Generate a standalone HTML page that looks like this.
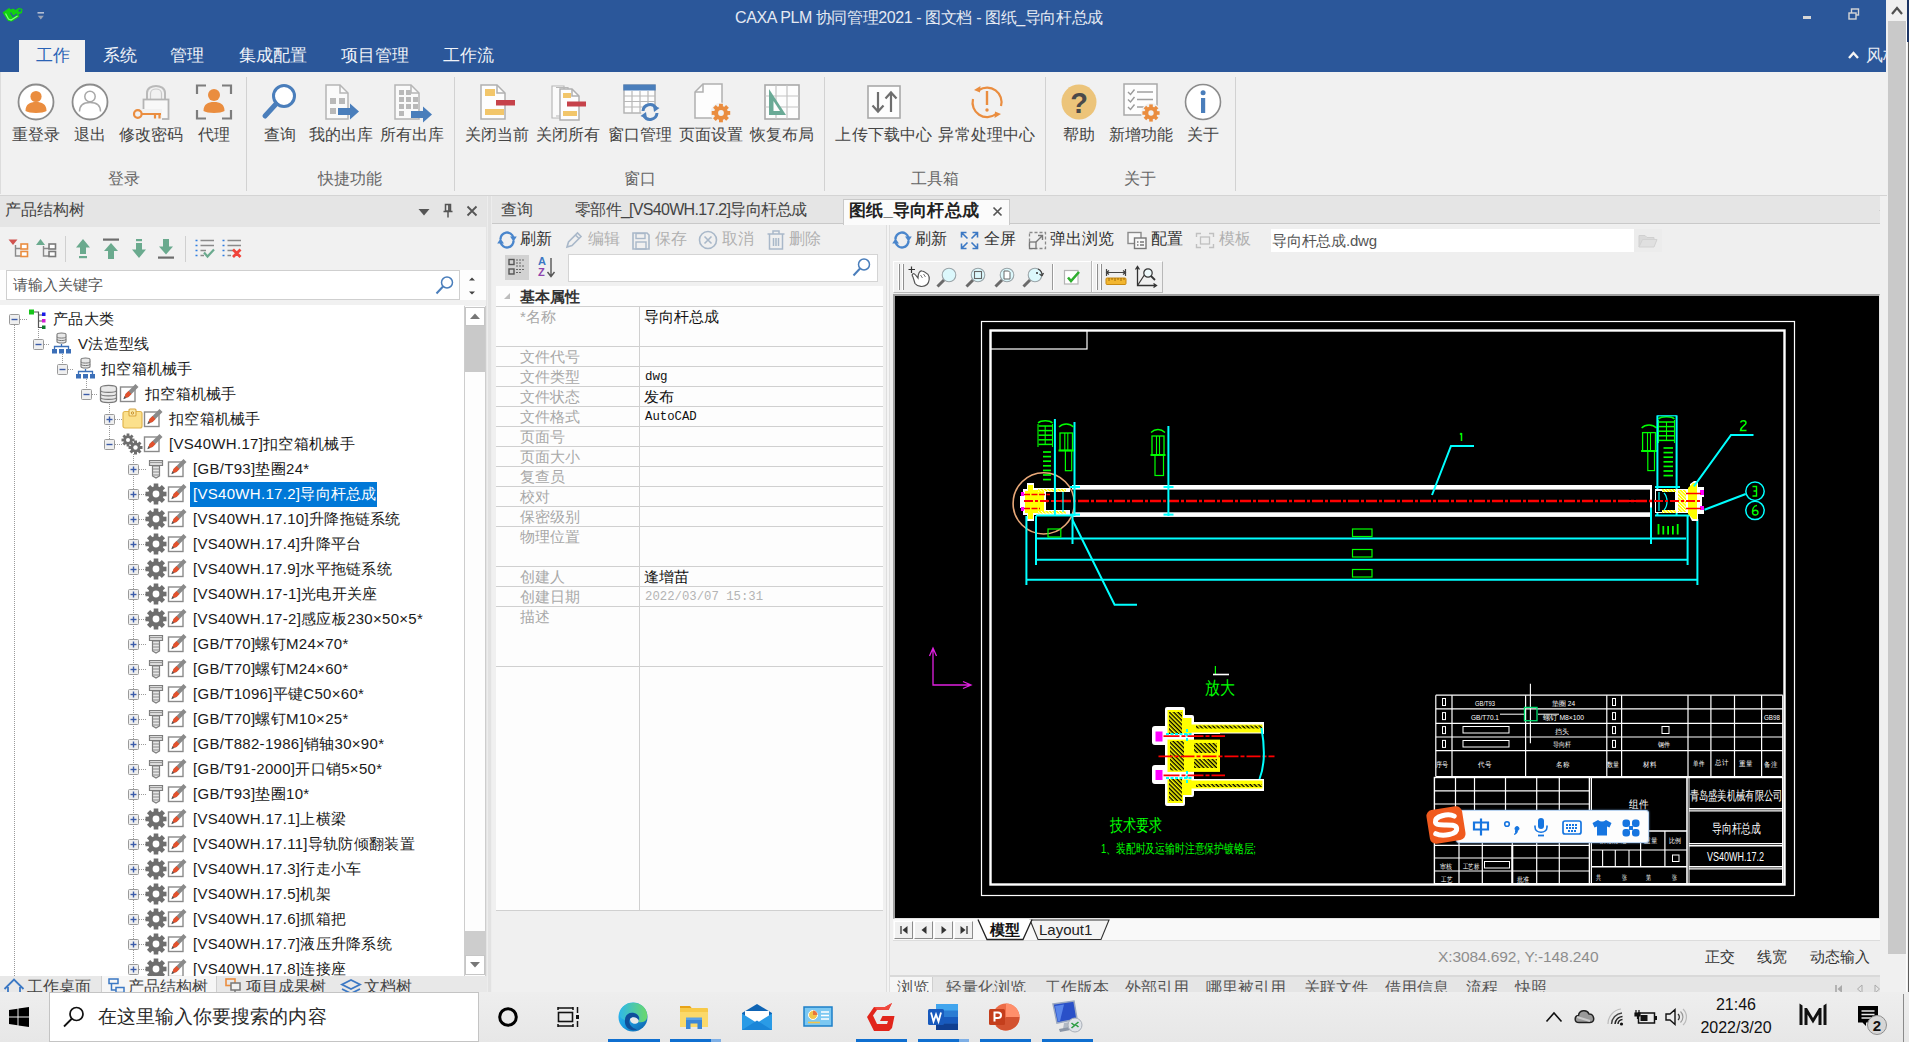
<!DOCTYPE html>
<html><head><meta charset="utf-8"><title>CAXA PLM</title>
<style>
*{box-sizing:border-box;margin:0;padding:0}
html,body{width:1909px;height:1042px;overflow:hidden;background:#f0f0f0}
body{font-family:"Liberation Sans",sans-serif;font-size:15px;color:#333}
#root{position:relative;width:1909px;height:1042px;overflow:hidden;background:#f0f0f0}
.a{position:absolute}
.t{position:absolute;white-space:nowrap;line-height:1}
svg{position:absolute;overflow:visible}

</style></head>
<body>
<div id="root">
<div class="a" style="left:0;top:0;width:1886px;height:72px;background:#2b579a"></div>
<svg style="left:2px;top:7px" width="22" height="16" viewBox="0 0 22 16"><path d="M0.500 5.500 L7 1 L9 2.500 L11 1.500 L13.500 3 L17 0.800 L20.500 2 L20 6 L16.500 7.500 L17.500 9.500 L10 14.500 L6 14 Z" fill="#12d112"/><path d="M3.500 6.500 L6.500 12 L9 13 L15.500 9" fill="none" stroke="#7dff7d" stroke-width="1.200"/><path d="M8.500 5.500 L11 9.500 L15 7" fill="none" stroke="#2b579a" stroke-width="1.300"/><circle cx="17.800" cy="3.600" r="1.300" fill="#2b579a"/></svg>
<svg style="left:37px;top:11px" width="8" height="9" viewBox="0 0 8 9"><rect x="0.500" y="1" width="6.500" height="1.600" fill="#b4bfd4"/><path d="M0.800 4.800 L6.800 4.800 L3.800 8.500 Z" fill="#9aa3b5"/></svg>
<div class="t" style="left:735px;top:10px;font-size:16px;color:#e4e9f2;letter-spacing:-0.400px">CAXA PLM 协同管理2021 - 图文档 - 图纸_导向杆总成</div>
<div class="a" style="left:1803px;top:16px;width:8px;height:3px;background:#d6d6d6"></div>
<svg style="left:1848px;top:8px" width="12" height="12" viewBox="0 0 12 12"><rect x="3.5" y="1" width="7" height="6" fill="none" stroke="#d6d6d6" stroke-width="1.4"/><rect x="1" y="5" width="7" height="6" fill="#2b579a" stroke="#d6d6d6" stroke-width="1.4"/></svg>
<div class="a" style="left:19px;top:40px;width:66px;height:33px;background:#f1f1f1"></div>
<div class="t" style="left:36px;top:47px;font-size:17px;color:#2b63b5">工作</div>
<div class="t" style="left:103px;top:47px;font-size:17px;color:#f0f3f8">系统</div>
<div class="t" style="left:170px;top:47px;font-size:17px;color:#f0f3f8">管理</div>
<div class="t" style="left:239px;top:47px;font-size:17px;color:#f0f3f8">集成配置</div>
<div class="t" style="left:341px;top:47px;font-size:17px;color:#f0f3f8">项目管理</div>
<div class="t" style="left:443px;top:47px;font-size:17px;color:#f0f3f8">工作流</div>
<svg style="left:1848px;top:51px" width="11" height="8" viewBox="0 0 11 8"><path d="M1 7 L5.5 2 L10 7" fill="none" stroke="#f4f4f4" stroke-width="2.4"/></svg>
<div class="a" style="left:1866px;top:46px;width:21px;height:20px;overflow:hidden"><div class="t" style="left:0;top:1px;font-size:17px;color:#e8ecf4">风格</div></div>
<div class="a" style="left:0;top:72px;width:1887px;height:124px;background:#f1f1f1;border-bottom:1px solid #d4d4d4"></div>
<div class="a" style="left:0;top:72px;width:1px;height:122px;background:#dcdcdc"></div>
<div class="a" style="left:246px;top:77px;width:1px;height:114px;background:#d2d2d2"></div>
<div class="a" style="left:454px;top:77px;width:1px;height:114px;background:#d2d2d2"></div>
<div class="a" style="left:824px;top:77px;width:1px;height:114px;background:#d2d2d2"></div>
<div class="a" style="left:1045px;top:77px;width:1px;height:114px;background:#d2d2d2"></div>
<div class="a" style="left:1235px;top:77px;width:1px;height:114px;background:#d2d2d2"></div>
<svg style="left:16px;top:82px" width="40" height="40" viewBox="0 0 40 40"><circle cx="20" cy="20" r="17.5" fill="#fff" stroke="#8c8c8c" stroke-width="1.8"/><circle cx="20" cy="14.5" r="5.6" fill="#ea8d3f"/><path d="M9.5 29 C9.5 22 14 20 20 20 C26 20 30.500 22 30.500 29 C27 31.500 13 31.500 9.500 29 Z" fill="#ea8d3f"/></svg>
<svg style="left:70px;top:82px" width="40" height="40" viewBox="0 0 40 40"><circle cx="20" cy="20" r="17.5" fill="#fff" stroke="#8c8c8c" stroke-width="1.8"/><circle cx="20" cy="14.5" r="5.2" fill="#fff" stroke="#a8a8a8" stroke-width="1.5"/><path d="M9.5 29.500 C9.500 22.500 14 20.500 20 20.500 C26 20.500 30.500 22.500 30.500 29.500" fill="#fff" stroke="#a8a8a8" stroke-width="1.500"/></svg>
<svg style="left:131px;top:82px" width="40" height="40" viewBox="0 0 40 40"><path d="M16 18 V11 C16 1.500 34 1.500 34 11 V18" fill="none" stroke="#b9b9b9" stroke-width="2"/><path d="M19.500 18 V11.500 C19.500 5.500 30.500 5.500 30.500 11.500 V18" fill="none" stroke="#c9c9c9" stroke-width="1.200"/><rect x="12.500" y="17.500" width="25" height="19.500" fill="#f8f8f8" stroke="#b4b4b4" stroke-width="1.800"/><rect x="9" y="27" width="22" height="12" fill="#f1f1f1"/><circle cx="6.800" cy="32" r="3.800" fill="none" stroke="#ea8d3f" stroke-width="2.200"/><path d="M10.500 32 H30 M24 32 V36.500 M28.500 32 V36.500" fill="none" stroke="#ea8d3f" stroke-width="2.200"/></svg>
<svg style="left:194px;top:82px" width="40" height="40" viewBox="0 0 40 40"><path d="M3 12 V3.500 H12 M28 3.500 H37 V12 M37 28 V36.500 H28 M12 36.500 H3 V28" fill="none" stroke="#7d7d7d" stroke-width="2.200"/><circle cx="20" cy="13" r="6" fill="#ea8d3f"/><path d="M9.5 29 C9.5 22 14 20 20 20 C26 20 30.500 22 30.500 29 C27 31.500 13 31.500 9.500 29 Z" fill="#ea8d3f"/></svg>
<svg style="left:260px;top:82px" width="40" height="40" viewBox="0 0 40 40"><circle cx="24" cy="14" r="10.500" fill="#fff" stroke="#4a7ebb" stroke-width="3"/><path d="M16 22 L5 34" stroke="#4a7ebb" stroke-width="5" stroke-linecap="round"/></svg>
<svg style="left:321px;top:82px" width="40" height="40" viewBox="0 0 40 40"><path d="M5 3 H19 L27 11 V37 H5 Z" fill="#fafafa" stroke="#b5b5b5" stroke-width="1.5"/><path d="M19 3 V11 H27" fill="none" stroke="#b5b5b5" stroke-width="1.500"/><rect x="9" y="16" width="6" height="6" fill="#b9b9b9"/><rect x="18" y="16" width="6" height="6" fill="#b9b9b9"/><rect x="9" y="26" width="6" height="6" fill="#b9b9b9"/><path d="M17 26 h12 v-4.500 l9 8 l-9 8 v-4.500 h-12 Z" fill="#4a7ebb"/></svg>
<svg style="left:392px;top:82px" width="40" height="40" viewBox="0 0 40 40"><path d="M3 3 H19 L27 11 V37 H3 Z" fill="#fafafa" stroke="#b5b5b5" stroke-width="1.5"/><path d="M19 3 V11 H27" fill="none" stroke="#b5b5b5" stroke-width="1.500"/><rect x="7" y="8" width="5" height="5" fill="#b9b9b9"/><rect x="7" y="15" width="5" height="5" fill="#b9b9b9"/><rect x="7" y="22" width="5" height="5" fill="#b9b9b9"/><rect x="7" y="29" width="5" height="5" fill="#b9b9b9"/><rect x="14" y="8" width="5" height="5" fill="#b9b9b9"/><rect x="14" y="15" width="5" height="5" fill="#b9b9b9"/><rect x="14" y="22" width="5" height="5" fill="#b9b9b9"/><rect x="21" y="15" width="5" height="5" fill="#b9b9b9"/><rect x="21" y="22" width="5" height="5" fill="#b9b9b9"/><path d="M19 29 h12 v-4.500 l9 8 l-9 8 v-4.500 h-12 Z" fill="#4a7ebb"/></svg>
<svg style="left:477px;top:82px" width="40" height="40" viewBox="0 0 40 40"><path d="M4 3 H20 L28 11 V37 H4 Z" fill="#fdfdfd" stroke="#b0b0b0" stroke-width="1.500"/><path d="M20 3 V11 H28" fill="none" stroke="#b0b0b0" stroke-width="1.500"/><rect x="8" y="7" width="10" height="7" fill="#f2c66a"/><rect x="8" y="27" width="19" height="6" fill="#f2c66a"/><rect x="19" y="18" width="19" height="5.500" fill="#c6424a"/></svg>
<svg style="left:548px;top:82px" width="40" height="40" viewBox="0 0 40 40"><path d="M4 4 H16 V36 H4 Z M8 5.500 H20 V34 H8" fill="#fafafa" stroke="#b8b8b8" stroke-width="1.200"/><path d="M12 7 H24 L31 14 V38 H12 Z" fill="#fdfdfd" stroke="#b0b0b0" stroke-width="1.500"/><path d="M24 7 V14 H31" fill="none" stroke="#b0b0b0" stroke-width="1.500"/><rect x="15" y="11" width="8" height="5" fill="#f2c66a"/><rect x="15" y="29" width="14" height="5" fill="#f2c66a"/><rect x="19" y="19.500" width="19" height="5" fill="#c6424a"/></svg>
<svg style="left:620px;top:82px" width="40" height="40" viewBox="0 0 40 40"><rect x="4" y="3" width="31" height="28" fill="#fdfdfd" stroke="#b0b0b0" stroke-width="1.400"/><rect x="3.300" y="2.500" width="32.400" height="6" fill="#4a7ebb"/><path d="M4 14 H35 M4 19.500 H35 M4 25 H35 M12 9 V31 M20 9 V31 M28 9 V31" stroke="#b8b8b8" stroke-width="1.200"/><circle cx="30" cy="30" r="9" fill="#f1f1f1"/><path d="M23 29 A7 7 0 0 1 36 26" fill="none" stroke="#4a7ebb" stroke-width="3"/><path d="M37 31 A7 7 0 0 1 24 34" fill="none" stroke="#4a7ebb" stroke-width="3"/><path d="M33 23 L39.500 26 L34 30 Z M27 37 L20.500 34 L26 30 Z" fill="#4a7ebb"/></svg>
<svg style="left:691px;top:82px" width="40" height="40" viewBox="0 0 40 40"><path d="M4 10 L12 2 H31 V36 H4 Z" fill="#fdfdfd" stroke="#b0b0b0" stroke-width="1.500"/><path d="M12 2 V10 H4" fill="none" stroke="#b0b0b0" stroke-width="1.500"/><circle cx="30" cy="31" r="10.500" fill="#f1f1f1"/><g transform="translate(30 31)"><rect x="-2.0" y="-9.2" width="3.9" height="18.5" fill="#ea8d3f" transform="rotate(0)"/><rect x="-2.0" y="-9.2" width="3.9" height="18.5" fill="#ea8d3f" transform="rotate(45)"/><rect x="-2.0" y="-9.2" width="3.9" height="18.5" fill="#ea8d3f" transform="rotate(90)"/><rect x="-2.0" y="-9.2" width="3.9" height="18.5" fill="#ea8d3f" transform="rotate(135)"/><circle r="7.0" fill="#ea8d3f"/><circle r="2.9" fill="#f1f1f1"/></g></svg>
<svg style="left:762px;top:82px" width="40" height="40" viewBox="0 0 40 40"><rect x="3" y="3" width="34" height="34" fill="#fdfdfd" stroke="#a9a9a9" stroke-width="1.600"/><path d="M3 14 H37 M3 25 H37 M14 3 V37 M25 3 V37" stroke="#c4c4c4" stroke-width="1.200"/><path d="M7 7 V33 H24 Z" fill="#6aaa96"/><path d="M11.500 19 V29 H18 Z" fill="#fdfdfd"/></svg>
<svg style="left:864px;top:82px" width="40" height="40" viewBox="0 0 40 40"><rect x="4" y="4" width="32" height="32" fill="#fdfdfd" stroke="#a9a9a9" stroke-width="1.600"/><path d="M14 10 V29 M8.500 23.500 L14 29.500 L19.500 23.500" fill="none" stroke="#6e6e6e" stroke-width="2.200"/><path d="M27 30 V11 M21.500 16.500 L27 10.500 L32.500 16.500" fill="none" stroke="#6e6e6e" stroke-width="2.200"/></svg>
<svg style="left:967px;top:82px" width="40" height="40" viewBox="0 0 40 40"><path d="M12 8 A14.500 14.500 0 0 1 34 24" fill="none" stroke="#ea8d3f" stroke-width="2.200"/><path d="M29 32 A14.500 14.500 0 0 1 6 17" fill="none" stroke="#ea8d3f" stroke-width="2.200"/><path d="M13.500 4 L13 10.500 L7 8 Z M27.500 36 L28 29.500 L34 32 Z" fill="#ea8d3f"/><path d="M20 9 V23" stroke="#ea8d3f" stroke-width="2.400"/><circle cx="20" cy="28" r="1.700" fill="#ea8d3f"/></svg>
<svg style="left:1059px;top:82px" width="40" height="40" viewBox="0 0 40 40"><circle cx="20" cy="20" r="17.500" fill="#ecc47a"/><text x="20" y="30.500" font-family="Liberation Sans" font-weight="bold" font-size="29" text-anchor="middle" fill="#4a4a4a">?</text></svg>
<svg style="left:1121px;top:82px" width="40" height="40" viewBox="0 0 40 40"><rect x="3" y="2" width="33" height="31" fill="#fdfdfd" stroke="#a9a9a9" stroke-width="1.500"/><path d="M16 10 H32 M16 17.500 H32 M16 25 H24" stroke="#a0a0a0" stroke-width="1.400"/><path d="M7 10 l2.500 2.500 l4 -5 M7 17.500 l2.500 2.500 l4 -5 M7 25 l2.500 2.500 l4 -5" fill="none" stroke="#9a9a9a" stroke-width="1.400"/><circle cx="30" cy="31" r="10" fill="#f1f1f1"/><g transform="translate(30 31)"><rect x="-1.8" y="-8.6" width="3.6" height="17.2" fill="#ea8d3f" transform="rotate(0)"/><rect x="-1.8" y="-8.6" width="3.6" height="17.2" fill="#ea8d3f" transform="rotate(45)"/><rect x="-1.8" y="-8.6" width="3.6" height="17.2" fill="#ea8d3f" transform="rotate(90)"/><rect x="-1.8" y="-8.6" width="3.6" height="17.2" fill="#ea8d3f" transform="rotate(135)"/><circle r="6.5" fill="#ea8d3f"/><circle r="2.7" fill="#f1f1f1"/></g></svg>
<svg style="left:1183px;top:82px" width="40" height="40" viewBox="0 0 40 40"><circle cx="20" cy="20" r="17.500" fill="#fff" stroke="#8c8c8c" stroke-width="1.600"/><rect x="18" y="16" width="4.200" height="15" fill="#4a7ebb"/><circle cx="20.100" cy="10.800" r="2.500" fill="#4a7ebb"/></svg>
<div class="t" style="left:-34px;top:127px;width:140px;text-align:center;font-size:16px;color:#444;letter-spacing:0.2px">重登录</div>
<div class="t" style="left:20px;top:127px;width:140px;text-align:center;font-size:16px;color:#444;letter-spacing:0.2px">退出</div>
<div class="t" style="left:81px;top:127px;width:140px;text-align:center;font-size:16px;color:#444;letter-spacing:0.2px">修改密码</div>
<div class="t" style="left:144px;top:127px;width:140px;text-align:center;font-size:16px;color:#444;letter-spacing:0.2px">代理</div>
<div class="t" style="left:210px;top:127px;width:140px;text-align:center;font-size:16px;color:#444;letter-spacing:0.2px">查询</div>
<div class="t" style="left:271px;top:127px;width:140px;text-align:center;font-size:16px;color:#444;letter-spacing:0.2px">我的出库</div>
<div class="t" style="left:342px;top:127px;width:140px;text-align:center;font-size:16px;color:#444;letter-spacing:0.2px">所有出库</div>
<div class="t" style="left:427px;top:127px;width:140px;text-align:center;font-size:16px;color:#444;letter-spacing:0.2px">关闭当前</div>
<div class="t" style="left:498px;top:127px;width:140px;text-align:center;font-size:16px;color:#444;letter-spacing:0.2px">关闭所有</div>
<div class="t" style="left:570px;top:127px;width:140px;text-align:center;font-size:16px;color:#444;letter-spacing:0.2px">窗口管理</div>
<div class="t" style="left:641px;top:127px;width:140px;text-align:center;font-size:16px;color:#444;letter-spacing:0.2px">页面设置</div>
<div class="t" style="left:712px;top:127px;width:140px;text-align:center;font-size:16px;color:#444;letter-spacing:0.2px">恢复布局</div>
<div class="t" style="left:814px;top:127px;width:140px;text-align:center;font-size:16px;color:#444;letter-spacing:0.2px">上传下载中心</div>
<div class="t" style="left:917px;top:127px;width:140px;text-align:center;font-size:16px;color:#444;letter-spacing:0.2px">异常处理中心</div>
<div class="t" style="left:1009px;top:127px;width:140px;text-align:center;font-size:16px;color:#444;letter-spacing:0.2px">帮助</div>
<div class="t" style="left:1071px;top:127px;width:140px;text-align:center;font-size:16px;color:#444;letter-spacing:0.2px">新增功能</div>
<div class="t" style="left:1133px;top:127px;width:140px;text-align:center;font-size:16px;color:#444;letter-spacing:0.2px">关于</div>
<div class="t" style="left:54px;top:171px;width:140px;text-align:center;font-size:16px;color:#666">登录</div>
<div class="t" style="left:280px;top:171px;width:140px;text-align:center;font-size:16px;color:#666">快捷功能</div>
<div class="t" style="left:570px;top:171px;width:140px;text-align:center;font-size:16px;color:#666">窗口</div>
<div class="t" style="left:865px;top:171px;width:140px;text-align:center;font-size:16px;color:#666">工具箱</div>
<div class="t" style="left:1070px;top:171px;width:140px;text-align:center;font-size:16px;color:#666">关于</div>
<div class="a" style="left:0;top:196px;width:487px;height:31px;background:#e5e5e5"></div>
<div class="t" style="left:5px;top:202px;font-size:16px;color:#444">产品结构树</div>
<svg style="left:418px;top:208px" width="12" height="8" viewBox="0 0 12 8"><path d="M0.500 1 H11.500 L6 7.500 Z" fill="#555"/></svg>
<svg style="left:442px;top:203px" width="12" height="16" viewBox="0 0 12 16"><path d="M3.500 1.500 H8.500 V8 H3.500 Z M1.500 8.500 H10.500 M6 9 V14.500" fill="none" stroke="#555" stroke-width="1.500"/><path d="M7 2 V8" stroke="#555" stroke-width="1.800"/></svg>
<svg style="left:466px;top:205px" width="12" height="12" viewBox="0 0 12 12"><path d="M1.500 1.500 L10.500 10.500 M10.500 1.500 L1.500 10.500" stroke="#555" stroke-width="1.800"/></svg>
<div class="a" style="left:0;top:227px;width:487px;height:765px;background:#f1f1f1"></div>
<div class="a" style="left:486px;top:196px;width:1px;height:796px;background:#e4e4e4"></div>
<svg style="left:7px;top:237px" width="24" height="24" viewBox="0 0 24 24"><path d="M1.500 2.500 H10.500 L6 8 Z" fill="#d0534f"/><path d="M8.500 8 V19 H14 M8.500 11.500 H14" fill="none" stroke="#8a8a8a" stroke-width="1.400"/><rect x="14" y="7" width="6.500" height="5" fill="#fff" stroke="#ea8d3f" stroke-width="1.600"/><rect x="14" y="14.500" width="6.500" height="5" fill="#fff" stroke="#ea8d3f" stroke-width="1.600"/></svg>
<svg style="left:34px;top:237px" width="24" height="24" viewBox="0 0 24 24"><path d="M6.500 2 L11 8 H2 Z" fill="#6aaa8e"/><path d="M9.500 9 V19 H15 M9.500 11.500 H15" fill="none" stroke="#8a8a8a" stroke-width="1.400"/><rect x="15" y="7" width="6.500" height="5" fill="#fff" stroke="#7a7a7a" stroke-width="1.600"/><rect x="15" y="14.500" width="6.500" height="5" fill="#fff" stroke="#7a7a7a" stroke-width="1.600"/></svg>
<div class="a" style="left:65px;top:236px;width:1px;height:26px;background:#d0d0d0"></div>
<svg style="left:71px;top:237px" width="24" height="24" viewBox="0 0 24 24"><path d="M12 2 L19 10.500 H15 V17 H9 V10.500 H5 Z" fill="#6aaa8e"/><rect x="8" y="19" width="8" height="2.200" fill="#6aaa8e"/></svg>
<svg style="left:99px;top:237px" width="24" height="24" viewBox="0 0 24 24"><rect x="4" y="1.500" width="16" height="2.200" fill="#6d6d6d"/><path d="M12 6 L19 14 H15 V22 H9 V14 H5 Z" fill="#6aaa8e"/></svg>
<svg style="left:127px;top:237px" width="24" height="24" viewBox="0 0 24 24"><rect x="9" y="2" width="6" height="2.200" fill="#6aaa8e"/><path d="M9 6 H15 V12.500 H19 L12 21 L5 12.500 H9 Z" fill="#6aaa8e"/></svg>
<svg style="left:154px;top:237px" width="24" height="24" viewBox="0 0 24 24"><path d="M9 2 H15 V9.500 H19 L12 17.500 L5 9.500 H9 Z" fill="#6aaa8e"/><rect x="4" y="19.500" width="16" height="2.200" fill="#6d6d6d"/></svg>
<div class="a" style="left:185px;top:236px;width:1px;height:26px;background:#d0d0d0"></div>
<svg style="left:193px;top:237px" width="24" height="24" viewBox="0 0 24 24"><path d="M7.500 3.500 H21 M7.500 8.500 H21 M7.500 13.500 H13 M7.500 18.500 H11" stroke="#8a8a8a" stroke-width="1.400"/><path d="M2.500 3.500 H4.500 M2.500 8.500 H4.500 M2.500 13.500 H4.500 M2.500 18.500 H4.500" stroke="#2f7de0" stroke-width="1.600"/><path d="M11 15.500 L14.500 19.500 L21 12.500" fill="none" stroke="#6aaa8e" stroke-width="2.200"/></svg>
<svg style="left:220px;top:237px" width="24" height="24" viewBox="0 0 24 24"><path d="M7.500 3.500 H21 M7.500 8.500 H21 M7.500 13.500 H13 M7.500 18.500 H11" stroke="#8a8a8a" stroke-width="1.400"/><path d="M2.500 3.500 H4.500 M2.500 8.500 H4.500 M2.500 13.500 H4.500 M2.500 18.500 H4.500" stroke="#2f7de0" stroke-width="1.600"/><path d="M13 12.500 L20.500 20 M20.500 12.500 L13 20" fill="none" stroke="#f0443a" stroke-width="2.800"/></svg>
<div class="a" style="left:0;top:270px;width:486px;height:30px;background:#fdfdfd"></div>
<div class="a" style="left:6px;top:270px;width:454px;height:30px;background:#fff;border:1px solid #cfcfcf"></div>
<div class="t" style="left:13px;top:277px;font-size:15px;color:#555">请输入关键字</div>
<svg style="left:435px;top:275px" width="20" height="20" viewBox="0 0 20 20"><circle cx="12" cy="7.500" r="5.500" fill="none" stroke="#4a7ebb" stroke-width="1.500"/><path d="M8 11.500 L1.500 18.500" stroke="#4a7ebb" stroke-width="2"/></svg>
<svg style="left:468px;top:276px" width="8" height="20" viewBox="0 0 8 20"><path d="M1 4.500 L4 1.500 L7 4.500 Z M1 15.500 L4 18.500 L7 15.500 Z" fill="#444"/></svg>
<div class="a" style="left:0;top:305px;width:464px;height:671px;background:#fff"></div>
<div class="a" style="left:464px;top:306px;width:22px;height:670px;background:#fdfdfd;border-left:1px solid #cdcdcd;border-right:1px solid #cdcdcd"></div>
<div class="a" style="left:465px;top:307px;width:20px;height:19px;background:#fff;border:1px solid #c6c6c6"></div>
<svg style="left:469px;top:312px" width="12" height="8" viewBox="0 0 12 8"><path d="M1 7 L6 1.500 L11 7 Z" fill="#777"/></svg>
<div class="a" style="left:465px;top:326px;width:20px;height:46px;background:#c9c9c9"></div>
<div class="a" style="left:465px;top:931px;width:20px;height:24px;background:#cdcdcd"></div>
<div class="a" style="left:465px;top:955px;width:20px;height:20px;background:#fff;border:1px solid #c6c6c6"></div>
<svg style="left:469px;top:961px" width="12" height="8" viewBox="0 0 12 8"><path d="M1 1 L6 6.500 L11 1 Z" fill="#777"/></svg>
<div class="a" style="left:14px;top:325px;width:1px;height:651px;background:repeating-linear-gradient(180deg,#9a9a9a 0 1px,transparent 1px 2px)"></div>
<div class="a" style="left:38px;top:329px;width:1px;height:10px;background:repeating-linear-gradient(180deg,#9a9a9a 0 1px,transparent 1px 2px)"></div>
<div class="a" style="left:62px;top:354px;width:1px;height:10px;background:repeating-linear-gradient(180deg,#9a9a9a 0 1px,transparent 1px 2px)"></div>
<div class="a" style="left:86px;top:379px;width:1px;height:10px;background:repeating-linear-gradient(180deg,#9a9a9a 0 1px,transparent 1px 2px)"></div>
<div class="a" style="left:109px;top:404px;width:1px;height:35px;background:repeating-linear-gradient(180deg,#9a9a9a 0 1px,transparent 1px 2px)"></div>
<div class="a" style="left:133px;top:454px;width:1px;height:522px;background:repeating-linear-gradient(180deg,#9a9a9a 0 1px,transparent 1px 2px)"></div>
<div class="a" style="left:20px;top:319px;width:8px;height:1px;background:repeating-linear-gradient(90deg,#9a9a9a 0 1px,transparent 1px 2px)"></div>
<svg style="left:9px;top:314px" width="11" height="11" viewBox="0 0 11 11"><rect x="0.500" y="0.500" width="10" height="10" rx="1" fill="#efefef" stroke="#9a9a9a"/><path d="M2.500 5.500 H8.500" stroke="#3b5ba8" stroke-width="1.400"/></svg>
<svg style="left:28px;top:308px" width="20" height="22" viewBox="0 0 20 22"><rect x="1" y="1.500" width="5" height="5" fill="#17c41a"/><path d="M6 4 H10.500 V19.500 H14 M10.500 7 H14 M10.500 13 H14" fill="none" stroke="#555" stroke-width="1.200"/><rect x="14" y="4.500" width="3.500" height="3.500" fill="#1a1ae6"/><rect x="14" y="11" width="3.500" height="3.500" fill="#d11bd1"/><rect x="14" y="17.500" width="3.500" height="3.500" fill="#0c7a2a"/></svg>
<div class="t" style="left:53px;top:311px;font-size:15px;color:#1a1a1a;letter-spacing:0.300px">产品大类</div>
<div class="a" style="left:44px;top:344px;width:6px;height:1px;background:repeating-linear-gradient(90deg,#9a9a9a 0 1px,transparent 1px 2px)"></div>
<svg style="left:33px;top:339px" width="11" height="11" viewBox="0 0 11 11"><rect x="0.500" y="0.500" width="10" height="10" rx="1" fill="#efefef" stroke="#9a9a9a"/><path d="M2.500 5.500 H8.500" stroke="#3b5ba8" stroke-width="1.400"/></svg>
<svg style="left:51px;top:332px" width="22" height="22" viewBox="0 0 22 22"><path d="M6 2.500 C6 0.500 15 0.500 15 2.500 V9.500 C15 11.500 6 11.500 6 9.500 Z" fill="#e8e8e8" stroke="#777" stroke-width="1.100"/><path d="M6 4.800 C6 6.500 15 6.500 15 4.800 M6 7.200 C6 9 15 9 15 7.200" fill="none" stroke="#777"/><path d="M10.500 12 V14.500 M3.500 17.500 V14.500 H17.500 V17.500" fill="none" stroke="#3b6fb8" stroke-width="1.300"/><rect x="1" y="17" width="5" height="4.500" fill="#3b6fb8"/><rect x="8" y="17" width="5" height="4.500" fill="#3b6fb8"/><rect x="15" y="17" width="5" height="4.500" fill="#3b6fb8"/></svg>
<div class="t" style="left:78px;top:336px;font-size:15px;color:#1a1a1a;letter-spacing:0.300px">V法造型线</div>
<div class="a" style="left:68px;top:369px;width:6px;height:1px;background:repeating-linear-gradient(90deg,#9a9a9a 0 1px,transparent 1px 2px)"></div>
<svg style="left:57px;top:364px" width="11" height="11" viewBox="0 0 11 11"><rect x="0.500" y="0.500" width="10" height="10" rx="1" fill="#efefef" stroke="#9a9a9a"/><path d="M2.500 5.500 H8.500" stroke="#3b5ba8" stroke-width="1.400"/></svg>
<svg style="left:75px;top:357px" width="22" height="22" viewBox="0 0 22 22"><path d="M6 2.500 C6 0.500 15 0.500 15 2.500 V9.500 C15 11.500 6 11.500 6 9.500 Z" fill="#e8e8e8" stroke="#777" stroke-width="1.100"/><path d="M6 4.800 C6 6.500 15 6.500 15 4.800 M6 7.200 C6 9 15 9 15 7.200" fill="none" stroke="#777"/><path d="M10.500 12 V14.500 M3.500 17.500 V14.500 H17.500 V17.500" fill="none" stroke="#3b6fb8" stroke-width="1.300"/><rect x="1" y="17" width="5" height="4.500" fill="#3b6fb8"/><rect x="8" y="17" width="5" height="4.500" fill="#3b6fb8"/><rect x="15" y="17" width="5" height="4.500" fill="#3b6fb8"/></svg>
<div class="t" style="left:101px;top:361px;font-size:15px;color:#1a1a1a;letter-spacing:0.300px">扣空箱机械手</div>
<div class="a" style="left:92px;top:394px;width:6px;height:1px;background:repeating-linear-gradient(90deg,#9a9a9a 0 1px,transparent 1px 2px)"></div>
<svg style="left:81px;top:389px" width="11" height="11" viewBox="0 0 11 11"><rect x="0.500" y="0.500" width="10" height="10" rx="1" fill="#efefef" stroke="#9a9a9a"/><path d="M2.500 5.500 H8.500" stroke="#3b5ba8" stroke-width="1.400"/></svg>
<svg style="left:99px;top:384px" width="20" height="20" viewBox="0 0 20 20"><path d="M1.500 4 C1.500 0.500 17.500 0.500 17.500 4 V16 C17.500 19.500 1.500 19.500 1.500 16 Z" fill="#e9e9e9" stroke="#7a7a7a" stroke-width="1.300"/><path d="M1.500 6.500 C1.500 9 17.500 9 17.500 6.500 M1.500 10 C1.500 12.500 17.500 12.500 17.500 10 M1.500 13.500 C1.500 16 17.500 16 17.500 13.500" fill="none" stroke="#7a7a7a" stroke-width="1.200"/></svg>
<svg style="left:119px;top:383px" width="20" height="20" viewBox="0 0 20 20"><rect x="1.500" y="4" width="14.500" height="14.500" fill="#fff" stroke="#8a8a8a" stroke-width="1.400"/><path d="M5 15.500 L6.500 11 L16.500 1 L19.500 4 L9.500 14 Z" fill="#8a8a8a"/><path d="M5 15.500 L6.500 11 L9.500 8 L12.500 11 L9.500 14 Z" fill="#e2512d"/><path d="M4.300 16.200 L5.400 13.200 L7.300 15.100 Z" fill="#555"/></svg>
<div class="t" style="left:145px;top:386px;font-size:15px;color:#1a1a1a;letter-spacing:0.300px">扣空箱机械手</div>
<div class="a" style="left:115px;top:419px;width:7px;height:1px;background:repeating-linear-gradient(90deg,#9a9a9a 0 1px,transparent 1px 2px)"></div>
<svg style="left:104px;top:414px" width="11" height="11" viewBox="0 0 11 11"><rect x="0.500" y="0.500" width="10" height="10" rx="1" fill="#efefef" stroke="#9a9a9a"/><path d="M2.500 5.500 H8.500" stroke="#3b5ba8" stroke-width="1.400"/><path d="M5.500 2.500 V8.500" stroke="#3b5ba8" stroke-width="1.400"/></svg>
<svg style="left:122px;top:408px" width="21" height="21" viewBox="0 0 21 21"><rect x="1" y="3.500" width="19" height="16.500" rx="2" fill="#fbe08c" stroke="#e1b54d" stroke-width="1.200"/><rect x="7" y="1" width="7" height="7" rx="1" fill="#fbe9a8" stroke="#d9a640" stroke-width="1.100"/><circle cx="10.500" cy="5" r="1.200" fill="none" stroke="#c9912a"/></svg>
<svg style="left:143px;top:408px" width="20" height="20" viewBox="0 0 20 20"><rect x="1.500" y="4" width="14.500" height="14.500" fill="#fff" stroke="#8a8a8a" stroke-width="1.400"/><path d="M5 15.500 L6.500 11 L16.500 1 L19.500 4 L9.500 14 Z" fill="#8a8a8a"/><path d="M5 15.500 L6.500 11 L9.500 8 L12.500 11 L9.500 14 Z" fill="#e2512d"/><path d="M4.300 16.200 L5.400 13.200 L7.300 15.100 Z" fill="#555"/></svg>
<div class="t" style="left:169px;top:411px;font-size:15px;color:#1a1a1a;letter-spacing:0.300px">扣空箱机械手</div>
<div class="a" style="left:115px;top:444px;width:7px;height:1px;background:repeating-linear-gradient(90deg,#9a9a9a 0 1px,transparent 1px 2px)"></div>
<svg style="left:104px;top:439px" width="11" height="11" viewBox="0 0 11 11"><rect x="0.500" y="0.500" width="10" height="10" rx="1" fill="#efefef" stroke="#9a9a9a"/><path d="M2.500 5.500 H8.500" stroke="#3b5ba8" stroke-width="1.400"/></svg>
<svg style="left:121px;top:433px" width="22" height="22" viewBox="0 0 22 22"><g transform="translate(7 7)"><rect x="-1.400" y="-6.500" width="2.800" height="13" fill="#6e6e6e" transform="rotate(0)"/><rect x="-1.400" y="-6.500" width="2.800" height="13" fill="#6e6e6e" transform="rotate(45)"/><rect x="-1.400" y="-6.500" width="2.800" height="13" fill="#6e6e6e" transform="rotate(90)"/><rect x="-1.400" y="-6.500" width="2.800" height="13" fill="#6e6e6e" transform="rotate(135)"/><circle r="4.600" fill="#6e6e6e"/><circle r="2" fill="#fff"/></g><g transform="translate(14.500 14.500)"><rect x="-1.500" y="-7" width="3" height="14" fill="#6e6e6e" transform="rotate(0)"/><rect x="-1.500" y="-7" width="3" height="14" fill="#6e6e6e" transform="rotate(45)"/><rect x="-1.500" y="-7" width="3" height="14" fill="#6e6e6e" transform="rotate(90)"/><rect x="-1.500" y="-7" width="3" height="14" fill="#6e6e6e" transform="rotate(135)"/><circle r="5" fill="#6e6e6e"/><circle r="2.200" fill="#fff"/></g></svg>
<svg style="left:143px;top:433px" width="20" height="20" viewBox="0 0 20 20"><rect x="1.500" y="4" width="14.500" height="14.500" fill="#fff" stroke="#8a8a8a" stroke-width="1.400"/><path d="M5 15.500 L6.500 11 L16.500 1 L19.500 4 L9.500 14 Z" fill="#8a8a8a"/><path d="M5 15.500 L6.500 11 L9.500 8 L12.500 11 L9.500 14 Z" fill="#e2512d"/><path d="M4.300 16.200 L5.400 13.200 L7.300 15.100 Z" fill="#555"/></svg>
<div class="t" style="left:169px;top:436px;font-size:15px;color:#1a1a1a;letter-spacing:0.300px">[VS40WH.17]扣空箱机械手</div>
<div class="a" style="left:0;top:305px;width:464px;height:671px;overflow:hidden">
</div>
<div class="a" style="left:139px;top:469px;width:7px;height:1px;background:repeating-linear-gradient(90deg,#9a9a9a 0 1px,transparent 1px 2px)"></div>
<svg style="left:128px;top:464px" width="11" height="11" viewBox="0 0 11 11"><rect x="0.500" y="0.500" width="10" height="10" rx="1" fill="#efefef" stroke="#9a9a9a"/><path d="M2.500 5.500 H8.500" stroke="#3b5ba8" stroke-width="1.400"/><path d="M5.500 2.500 V8.500" stroke="#3b5ba8" stroke-width="1.400"/></svg>
<svg style="left:148px;top:459px" width="16" height="20" viewBox="0 0 16 20"><path d="M1.500 1.500 H14.500 V6.500 H1.500 Z" fill="#dcdcdc" stroke="#7d7d7d" stroke-width="1.200"/><path d="M1.500 3.500 H14.500" stroke="#9a9a9a"/><path d="M4.500 7 V17 L8 19 L11.500 17 V7 Z" fill="#e6e6e6" stroke="#7d7d7d" stroke-width="1.200"/><path d="M4.500 10 H11.500 M4.500 13 H11.500 M4.500 16 H11.500" stroke="#8a8a8a"/></svg>
<svg style="left:167px;top:458px" width="20" height="20" viewBox="0 0 20 20"><rect x="1.500" y="4" width="14.500" height="14.500" fill="#fff" stroke="#8a8a8a" stroke-width="1.400"/><path d="M5 15.500 L6.500 11 L16.500 1 L19.500 4 L9.500 14 Z" fill="#8a8a8a"/><path d="M5 15.500 L6.500 11 L9.500 8 L12.500 11 L9.500 14 Z" fill="#e2512d"/><path d="M4.300 16.200 L5.400 13.200 L7.300 15.100 Z" fill="#555"/></svg>
<div class="t" style="left:193px;top:461px;font-size:15px;color:#1a1a1a;letter-spacing:0.300px">[GB/T93]垫圈24*</div>
<div class="a" style="left:139px;top:494px;width:7px;height:1px;background:repeating-linear-gradient(90deg,#9a9a9a 0 1px,transparent 1px 2px)"></div>
<svg style="left:128px;top:489px" width="11" height="11" viewBox="0 0 11 11"><rect x="0.500" y="0.500" width="10" height="10" rx="1" fill="#efefef" stroke="#9a9a9a"/><path d="M2.500 5.500 H8.500" stroke="#3b5ba8" stroke-width="1.400"/><path d="M5.500 2.500 V8.500" stroke="#3b5ba8" stroke-width="1.400"/></svg>
<svg style="left:145px;top:483px" width="22" height="22" viewBox="-11 -11 22 22"><rect x="-2.300" y="-10.500" width="4.600" height="21" fill="#6e6e6e" transform="rotate(0)"/><rect x="-2.300" y="-10.500" width="4.600" height="21" fill="#6e6e6e" transform="rotate(45)"/><rect x="-2.300" y="-10.500" width="4.600" height="21" fill="#6e6e6e" transform="rotate(90)"/><rect x="-2.300" y="-10.500" width="4.600" height="21" fill="#6e6e6e" transform="rotate(135)"/><circle r="7.800" fill="#6e6e6e"/><circle r="3.400" fill="#fff"/></svg>
<svg style="left:167px;top:483px" width="20" height="20" viewBox="0 0 20 20"><rect x="1.500" y="4" width="14.500" height="14.500" fill="#fff" stroke="#8a8a8a" stroke-width="1.400"/><path d="M5 15.500 L6.500 11 L16.500 1 L19.500 4 L9.500 14 Z" fill="#8a8a8a"/><path d="M5 15.500 L6.500 11 L9.500 8 L12.500 11 L9.500 14 Z" fill="#e2512d"/><path d="M4.300 16.200 L5.400 13.200 L7.300 15.100 Z" fill="#555"/></svg>
<div class="a" style="left:190px;top:482px;width:187px;height:25px;background:#0078d7"></div>
<div class="t" style="left:193px;top:486px;font-size:15px;color:#fff;letter-spacing:0.300px">[VS40WH.17.2]导向杆总成</div>
<div class="a" style="left:139px;top:519px;width:7px;height:1px;background:repeating-linear-gradient(90deg,#9a9a9a 0 1px,transparent 1px 2px)"></div>
<svg style="left:128px;top:514px" width="11" height="11" viewBox="0 0 11 11"><rect x="0.500" y="0.500" width="10" height="10" rx="1" fill="#efefef" stroke="#9a9a9a"/><path d="M2.500 5.500 H8.500" stroke="#3b5ba8" stroke-width="1.400"/><path d="M5.500 2.500 V8.500" stroke="#3b5ba8" stroke-width="1.400"/></svg>
<svg style="left:145px;top:508px" width="22" height="22" viewBox="-11 -11 22 22"><rect x="-2.300" y="-10.500" width="4.600" height="21" fill="#6e6e6e" transform="rotate(0)"/><rect x="-2.300" y="-10.500" width="4.600" height="21" fill="#6e6e6e" transform="rotate(45)"/><rect x="-2.300" y="-10.500" width="4.600" height="21" fill="#6e6e6e" transform="rotate(90)"/><rect x="-2.300" y="-10.500" width="4.600" height="21" fill="#6e6e6e" transform="rotate(135)"/><circle r="7.800" fill="#6e6e6e"/><circle r="3.400" fill="#fff"/></svg>
<svg style="left:167px;top:508px" width="20" height="20" viewBox="0 0 20 20"><rect x="1.500" y="4" width="14.500" height="14.500" fill="#fff" stroke="#8a8a8a" stroke-width="1.400"/><path d="M5 15.500 L6.500 11 L16.500 1 L19.500 4 L9.500 14 Z" fill="#8a8a8a"/><path d="M5 15.500 L6.500 11 L9.500 8 L12.500 11 L9.500 14 Z" fill="#e2512d"/><path d="M4.300 16.200 L5.400 13.200 L7.300 15.100 Z" fill="#555"/></svg>
<div class="t" style="left:193px;top:511px;font-size:15px;color:#1a1a1a;letter-spacing:0.300px">[VS40WH.17.10]升降拖链系统</div>
<div class="a" style="left:139px;top:544px;width:7px;height:1px;background:repeating-linear-gradient(90deg,#9a9a9a 0 1px,transparent 1px 2px)"></div>
<svg style="left:128px;top:539px" width="11" height="11" viewBox="0 0 11 11"><rect x="0.500" y="0.500" width="10" height="10" rx="1" fill="#efefef" stroke="#9a9a9a"/><path d="M2.500 5.500 H8.500" stroke="#3b5ba8" stroke-width="1.400"/><path d="M5.500 2.500 V8.500" stroke="#3b5ba8" stroke-width="1.400"/></svg>
<svg style="left:145px;top:533px" width="22" height="22" viewBox="-11 -11 22 22"><rect x="-2.300" y="-10.500" width="4.600" height="21" fill="#6e6e6e" transform="rotate(0)"/><rect x="-2.300" y="-10.500" width="4.600" height="21" fill="#6e6e6e" transform="rotate(45)"/><rect x="-2.300" y="-10.500" width="4.600" height="21" fill="#6e6e6e" transform="rotate(90)"/><rect x="-2.300" y="-10.500" width="4.600" height="21" fill="#6e6e6e" transform="rotate(135)"/><circle r="7.800" fill="#6e6e6e"/><circle r="3.400" fill="#fff"/></svg>
<svg style="left:167px;top:533px" width="20" height="20" viewBox="0 0 20 20"><rect x="1.500" y="4" width="14.500" height="14.500" fill="#fff" stroke="#8a8a8a" stroke-width="1.400"/><path d="M5 15.500 L6.500 11 L16.500 1 L19.500 4 L9.500 14 Z" fill="#8a8a8a"/><path d="M5 15.500 L6.500 11 L9.500 8 L12.500 11 L9.500 14 Z" fill="#e2512d"/><path d="M4.300 16.200 L5.400 13.200 L7.300 15.100 Z" fill="#555"/></svg>
<div class="t" style="left:193px;top:536px;font-size:15px;color:#1a1a1a;letter-spacing:0.300px">[VS40WH.17.4]升降平台</div>
<div class="a" style="left:139px;top:569px;width:7px;height:1px;background:repeating-linear-gradient(90deg,#9a9a9a 0 1px,transparent 1px 2px)"></div>
<svg style="left:128px;top:564px" width="11" height="11" viewBox="0 0 11 11"><rect x="0.500" y="0.500" width="10" height="10" rx="1" fill="#efefef" stroke="#9a9a9a"/><path d="M2.500 5.500 H8.500" stroke="#3b5ba8" stroke-width="1.400"/><path d="M5.500 2.500 V8.500" stroke="#3b5ba8" stroke-width="1.400"/></svg>
<svg style="left:145px;top:558px" width="22" height="22" viewBox="-11 -11 22 22"><rect x="-2.300" y="-10.500" width="4.600" height="21" fill="#6e6e6e" transform="rotate(0)"/><rect x="-2.300" y="-10.500" width="4.600" height="21" fill="#6e6e6e" transform="rotate(45)"/><rect x="-2.300" y="-10.500" width="4.600" height="21" fill="#6e6e6e" transform="rotate(90)"/><rect x="-2.300" y="-10.500" width="4.600" height="21" fill="#6e6e6e" transform="rotate(135)"/><circle r="7.800" fill="#6e6e6e"/><circle r="3.400" fill="#fff"/></svg>
<svg style="left:167px;top:558px" width="20" height="20" viewBox="0 0 20 20"><rect x="1.500" y="4" width="14.500" height="14.500" fill="#fff" stroke="#8a8a8a" stroke-width="1.400"/><path d="M5 15.500 L6.500 11 L16.500 1 L19.500 4 L9.500 14 Z" fill="#8a8a8a"/><path d="M5 15.500 L6.500 11 L9.500 8 L12.500 11 L9.500 14 Z" fill="#e2512d"/><path d="M4.300 16.200 L5.400 13.200 L7.300 15.100 Z" fill="#555"/></svg>
<div class="t" style="left:193px;top:561px;font-size:15px;color:#1a1a1a;letter-spacing:0.300px">[VS40WH.17.9]水平拖链系统</div>
<div class="a" style="left:139px;top:594px;width:7px;height:1px;background:repeating-linear-gradient(90deg,#9a9a9a 0 1px,transparent 1px 2px)"></div>
<svg style="left:128px;top:589px" width="11" height="11" viewBox="0 0 11 11"><rect x="0.500" y="0.500" width="10" height="10" rx="1" fill="#efefef" stroke="#9a9a9a"/><path d="M2.500 5.500 H8.500" stroke="#3b5ba8" stroke-width="1.400"/><path d="M5.500 2.500 V8.500" stroke="#3b5ba8" stroke-width="1.400"/></svg>
<svg style="left:145px;top:583px" width="22" height="22" viewBox="-11 -11 22 22"><rect x="-2.300" y="-10.500" width="4.600" height="21" fill="#6e6e6e" transform="rotate(0)"/><rect x="-2.300" y="-10.500" width="4.600" height="21" fill="#6e6e6e" transform="rotate(45)"/><rect x="-2.300" y="-10.500" width="4.600" height="21" fill="#6e6e6e" transform="rotate(90)"/><rect x="-2.300" y="-10.500" width="4.600" height="21" fill="#6e6e6e" transform="rotate(135)"/><circle r="7.800" fill="#6e6e6e"/><circle r="3.400" fill="#fff"/></svg>
<svg style="left:167px;top:583px" width="20" height="20" viewBox="0 0 20 20"><rect x="1.500" y="4" width="14.500" height="14.500" fill="#fff" stroke="#8a8a8a" stroke-width="1.400"/><path d="M5 15.500 L6.500 11 L16.500 1 L19.500 4 L9.500 14 Z" fill="#8a8a8a"/><path d="M5 15.500 L6.500 11 L9.500 8 L12.500 11 L9.500 14 Z" fill="#e2512d"/><path d="M4.300 16.200 L5.400 13.200 L7.300 15.100 Z" fill="#555"/></svg>
<div class="t" style="left:193px;top:586px;font-size:15px;color:#1a1a1a;letter-spacing:0.300px">[VS40WH.17-1]光电开关座</div>
<div class="a" style="left:139px;top:619px;width:7px;height:1px;background:repeating-linear-gradient(90deg,#9a9a9a 0 1px,transparent 1px 2px)"></div>
<svg style="left:128px;top:614px" width="11" height="11" viewBox="0 0 11 11"><rect x="0.500" y="0.500" width="10" height="10" rx="1" fill="#efefef" stroke="#9a9a9a"/><path d="M2.500 5.500 H8.500" stroke="#3b5ba8" stroke-width="1.400"/><path d="M5.500 2.500 V8.500" stroke="#3b5ba8" stroke-width="1.400"/></svg>
<svg style="left:145px;top:608px" width="22" height="22" viewBox="-11 -11 22 22"><rect x="-2.300" y="-10.500" width="4.600" height="21" fill="#6e6e6e" transform="rotate(0)"/><rect x="-2.300" y="-10.500" width="4.600" height="21" fill="#6e6e6e" transform="rotate(45)"/><rect x="-2.300" y="-10.500" width="4.600" height="21" fill="#6e6e6e" transform="rotate(90)"/><rect x="-2.300" y="-10.500" width="4.600" height="21" fill="#6e6e6e" transform="rotate(135)"/><circle r="7.800" fill="#6e6e6e"/><circle r="3.400" fill="#fff"/></svg>
<svg style="left:167px;top:608px" width="20" height="20" viewBox="0 0 20 20"><rect x="1.500" y="4" width="14.500" height="14.500" fill="#fff" stroke="#8a8a8a" stroke-width="1.400"/><path d="M5 15.500 L6.500 11 L16.500 1 L19.500 4 L9.500 14 Z" fill="#8a8a8a"/><path d="M5 15.500 L6.500 11 L9.500 8 L12.500 11 L9.500 14 Z" fill="#e2512d"/><path d="M4.300 16.200 L5.400 13.200 L7.300 15.100 Z" fill="#555"/></svg>
<div class="t" style="left:193px;top:611px;font-size:15px;color:#1a1a1a;letter-spacing:0.300px">[VS40WH.17-2]感应板230×50×5*</div>
<div class="a" style="left:139px;top:644px;width:7px;height:1px;background:repeating-linear-gradient(90deg,#9a9a9a 0 1px,transparent 1px 2px)"></div>
<svg style="left:128px;top:639px" width="11" height="11" viewBox="0 0 11 11"><rect x="0.500" y="0.500" width="10" height="10" rx="1" fill="#efefef" stroke="#9a9a9a"/><path d="M2.500 5.500 H8.500" stroke="#3b5ba8" stroke-width="1.400"/><path d="M5.500 2.500 V8.500" stroke="#3b5ba8" stroke-width="1.400"/></svg>
<svg style="left:148px;top:634px" width="16" height="20" viewBox="0 0 16 20"><path d="M1.500 1.500 H14.500 V6.500 H1.500 Z" fill="#dcdcdc" stroke="#7d7d7d" stroke-width="1.200"/><path d="M1.500 3.500 H14.500" stroke="#9a9a9a"/><path d="M4.500 7 V17 L8 19 L11.500 17 V7 Z" fill="#e6e6e6" stroke="#7d7d7d" stroke-width="1.200"/><path d="M4.500 10 H11.500 M4.500 13 H11.500 M4.500 16 H11.500" stroke="#8a8a8a"/></svg>
<svg style="left:167px;top:633px" width="20" height="20" viewBox="0 0 20 20"><rect x="1.500" y="4" width="14.500" height="14.500" fill="#fff" stroke="#8a8a8a" stroke-width="1.400"/><path d="M5 15.500 L6.500 11 L16.500 1 L19.500 4 L9.500 14 Z" fill="#8a8a8a"/><path d="M5 15.500 L6.500 11 L9.500 8 L12.500 11 L9.500 14 Z" fill="#e2512d"/><path d="M4.300 16.200 L5.400 13.200 L7.300 15.100 Z" fill="#555"/></svg>
<div class="t" style="left:193px;top:636px;font-size:15px;color:#1a1a1a;letter-spacing:0.300px">[GB/T70]螺钉M24×70*</div>
<div class="a" style="left:139px;top:669px;width:7px;height:1px;background:repeating-linear-gradient(90deg,#9a9a9a 0 1px,transparent 1px 2px)"></div>
<svg style="left:128px;top:664px" width="11" height="11" viewBox="0 0 11 11"><rect x="0.500" y="0.500" width="10" height="10" rx="1" fill="#efefef" stroke="#9a9a9a"/><path d="M2.500 5.500 H8.500" stroke="#3b5ba8" stroke-width="1.400"/><path d="M5.500 2.500 V8.500" stroke="#3b5ba8" stroke-width="1.400"/></svg>
<svg style="left:148px;top:659px" width="16" height="20" viewBox="0 0 16 20"><path d="M1.500 1.500 H14.500 V6.500 H1.500 Z" fill="#dcdcdc" stroke="#7d7d7d" stroke-width="1.200"/><path d="M1.500 3.500 H14.500" stroke="#9a9a9a"/><path d="M4.500 7 V17 L8 19 L11.500 17 V7 Z" fill="#e6e6e6" stroke="#7d7d7d" stroke-width="1.200"/><path d="M4.500 10 H11.500 M4.500 13 H11.500 M4.500 16 H11.500" stroke="#8a8a8a"/></svg>
<svg style="left:167px;top:658px" width="20" height="20" viewBox="0 0 20 20"><rect x="1.500" y="4" width="14.500" height="14.500" fill="#fff" stroke="#8a8a8a" stroke-width="1.400"/><path d="M5 15.500 L6.500 11 L16.500 1 L19.500 4 L9.500 14 Z" fill="#8a8a8a"/><path d="M5 15.500 L6.500 11 L9.500 8 L12.500 11 L9.500 14 Z" fill="#e2512d"/><path d="M4.300 16.200 L5.400 13.200 L7.300 15.100 Z" fill="#555"/></svg>
<div class="t" style="left:193px;top:661px;font-size:15px;color:#1a1a1a;letter-spacing:0.300px">[GB/T70]螺钉M24×60*</div>
<div class="a" style="left:139px;top:694px;width:7px;height:1px;background:repeating-linear-gradient(90deg,#9a9a9a 0 1px,transparent 1px 2px)"></div>
<svg style="left:128px;top:689px" width="11" height="11" viewBox="0 0 11 11"><rect x="0.500" y="0.500" width="10" height="10" rx="1" fill="#efefef" stroke="#9a9a9a"/><path d="M2.500 5.500 H8.500" stroke="#3b5ba8" stroke-width="1.400"/><path d="M5.500 2.500 V8.500" stroke="#3b5ba8" stroke-width="1.400"/></svg>
<svg style="left:148px;top:684px" width="16" height="20" viewBox="0 0 16 20"><path d="M1.500 1.500 H14.500 V6.500 H1.500 Z" fill="#dcdcdc" stroke="#7d7d7d" stroke-width="1.200"/><path d="M1.500 3.500 H14.500" stroke="#9a9a9a"/><path d="M4.500 7 V17 L8 19 L11.500 17 V7 Z" fill="#e6e6e6" stroke="#7d7d7d" stroke-width="1.200"/><path d="M4.500 10 H11.500 M4.500 13 H11.500 M4.500 16 H11.500" stroke="#8a8a8a"/></svg>
<svg style="left:167px;top:683px" width="20" height="20" viewBox="0 0 20 20"><rect x="1.500" y="4" width="14.500" height="14.500" fill="#fff" stroke="#8a8a8a" stroke-width="1.400"/><path d="M5 15.500 L6.500 11 L16.500 1 L19.500 4 L9.500 14 Z" fill="#8a8a8a"/><path d="M5 15.500 L6.500 11 L9.500 8 L12.500 11 L9.500 14 Z" fill="#e2512d"/><path d="M4.300 16.200 L5.400 13.200 L7.300 15.100 Z" fill="#555"/></svg>
<div class="t" style="left:193px;top:686px;font-size:15px;color:#1a1a1a;letter-spacing:0.300px">[GB/T1096]平键C50×60*</div>
<div class="a" style="left:139px;top:719px;width:7px;height:1px;background:repeating-linear-gradient(90deg,#9a9a9a 0 1px,transparent 1px 2px)"></div>
<svg style="left:128px;top:714px" width="11" height="11" viewBox="0 0 11 11"><rect x="0.500" y="0.500" width="10" height="10" rx="1" fill="#efefef" stroke="#9a9a9a"/><path d="M2.500 5.500 H8.500" stroke="#3b5ba8" stroke-width="1.400"/><path d="M5.500 2.500 V8.500" stroke="#3b5ba8" stroke-width="1.400"/></svg>
<svg style="left:148px;top:709px" width="16" height="20" viewBox="0 0 16 20"><path d="M1.500 1.500 H14.500 V6.500 H1.500 Z" fill="#dcdcdc" stroke="#7d7d7d" stroke-width="1.200"/><path d="M1.500 3.500 H14.500" stroke="#9a9a9a"/><path d="M4.500 7 V17 L8 19 L11.500 17 V7 Z" fill="#e6e6e6" stroke="#7d7d7d" stroke-width="1.200"/><path d="M4.500 10 H11.500 M4.500 13 H11.500 M4.500 16 H11.500" stroke="#8a8a8a"/></svg>
<svg style="left:167px;top:708px" width="20" height="20" viewBox="0 0 20 20"><rect x="1.500" y="4" width="14.500" height="14.500" fill="#fff" stroke="#8a8a8a" stroke-width="1.400"/><path d="M5 15.500 L6.500 11 L16.500 1 L19.500 4 L9.500 14 Z" fill="#8a8a8a"/><path d="M5 15.500 L6.500 11 L9.500 8 L12.500 11 L9.500 14 Z" fill="#e2512d"/><path d="M4.300 16.200 L5.400 13.200 L7.300 15.100 Z" fill="#555"/></svg>
<div class="t" style="left:193px;top:711px;font-size:15px;color:#1a1a1a;letter-spacing:0.300px">[GB/T70]螺钉M10×25*</div>
<div class="a" style="left:139px;top:744px;width:7px;height:1px;background:repeating-linear-gradient(90deg,#9a9a9a 0 1px,transparent 1px 2px)"></div>
<svg style="left:128px;top:739px" width="11" height="11" viewBox="0 0 11 11"><rect x="0.500" y="0.500" width="10" height="10" rx="1" fill="#efefef" stroke="#9a9a9a"/><path d="M2.500 5.500 H8.500" stroke="#3b5ba8" stroke-width="1.400"/><path d="M5.500 2.500 V8.500" stroke="#3b5ba8" stroke-width="1.400"/></svg>
<svg style="left:148px;top:734px" width="16" height="20" viewBox="0 0 16 20"><path d="M1.500 1.500 H14.500 V6.500 H1.500 Z" fill="#dcdcdc" stroke="#7d7d7d" stroke-width="1.200"/><path d="M1.500 3.500 H14.500" stroke="#9a9a9a"/><path d="M4.500 7 V17 L8 19 L11.500 17 V7 Z" fill="#e6e6e6" stroke="#7d7d7d" stroke-width="1.200"/><path d="M4.500 10 H11.500 M4.500 13 H11.500 M4.500 16 H11.500" stroke="#8a8a8a"/></svg>
<svg style="left:167px;top:733px" width="20" height="20" viewBox="0 0 20 20"><rect x="1.500" y="4" width="14.500" height="14.500" fill="#fff" stroke="#8a8a8a" stroke-width="1.400"/><path d="M5 15.500 L6.500 11 L16.500 1 L19.500 4 L9.500 14 Z" fill="#8a8a8a"/><path d="M5 15.500 L6.500 11 L9.500 8 L12.500 11 L9.500 14 Z" fill="#e2512d"/><path d="M4.300 16.200 L5.400 13.200 L7.300 15.100 Z" fill="#555"/></svg>
<div class="t" style="left:193px;top:736px;font-size:15px;color:#1a1a1a;letter-spacing:0.300px">[GB/T882-1986]销轴30×90*</div>
<div class="a" style="left:139px;top:769px;width:7px;height:1px;background:repeating-linear-gradient(90deg,#9a9a9a 0 1px,transparent 1px 2px)"></div>
<svg style="left:128px;top:764px" width="11" height="11" viewBox="0 0 11 11"><rect x="0.500" y="0.500" width="10" height="10" rx="1" fill="#efefef" stroke="#9a9a9a"/><path d="M2.500 5.500 H8.500" stroke="#3b5ba8" stroke-width="1.400"/><path d="M5.500 2.500 V8.500" stroke="#3b5ba8" stroke-width="1.400"/></svg>
<svg style="left:148px;top:759px" width="16" height="20" viewBox="0 0 16 20"><path d="M1.500 1.500 H14.500 V6.500 H1.500 Z" fill="#dcdcdc" stroke="#7d7d7d" stroke-width="1.200"/><path d="M1.500 3.500 H14.500" stroke="#9a9a9a"/><path d="M4.500 7 V17 L8 19 L11.500 17 V7 Z" fill="#e6e6e6" stroke="#7d7d7d" stroke-width="1.200"/><path d="M4.500 10 H11.500 M4.500 13 H11.500 M4.500 16 H11.500" stroke="#8a8a8a"/></svg>
<svg style="left:167px;top:758px" width="20" height="20" viewBox="0 0 20 20"><rect x="1.500" y="4" width="14.500" height="14.500" fill="#fff" stroke="#8a8a8a" stroke-width="1.400"/><path d="M5 15.500 L6.500 11 L16.500 1 L19.500 4 L9.500 14 Z" fill="#8a8a8a"/><path d="M5 15.500 L6.500 11 L9.500 8 L12.500 11 L9.500 14 Z" fill="#e2512d"/><path d="M4.300 16.200 L5.400 13.200 L7.300 15.100 Z" fill="#555"/></svg>
<div class="t" style="left:193px;top:761px;font-size:15px;color:#1a1a1a;letter-spacing:0.300px">[GB/T91-2000]开口销5×50*</div>
<div class="a" style="left:139px;top:794px;width:7px;height:1px;background:repeating-linear-gradient(90deg,#9a9a9a 0 1px,transparent 1px 2px)"></div>
<svg style="left:128px;top:789px" width="11" height="11" viewBox="0 0 11 11"><rect x="0.500" y="0.500" width="10" height="10" rx="1" fill="#efefef" stroke="#9a9a9a"/><path d="M2.500 5.500 H8.500" stroke="#3b5ba8" stroke-width="1.400"/><path d="M5.500 2.500 V8.500" stroke="#3b5ba8" stroke-width="1.400"/></svg>
<svg style="left:148px;top:784px" width="16" height="20" viewBox="0 0 16 20"><path d="M1.500 1.500 H14.500 V6.500 H1.500 Z" fill="#dcdcdc" stroke="#7d7d7d" stroke-width="1.200"/><path d="M1.500 3.500 H14.500" stroke="#9a9a9a"/><path d="M4.500 7 V17 L8 19 L11.500 17 V7 Z" fill="#e6e6e6" stroke="#7d7d7d" stroke-width="1.200"/><path d="M4.500 10 H11.500 M4.500 13 H11.500 M4.500 16 H11.500" stroke="#8a8a8a"/></svg>
<svg style="left:167px;top:783px" width="20" height="20" viewBox="0 0 20 20"><rect x="1.500" y="4" width="14.500" height="14.500" fill="#fff" stroke="#8a8a8a" stroke-width="1.400"/><path d="M5 15.500 L6.500 11 L16.500 1 L19.500 4 L9.500 14 Z" fill="#8a8a8a"/><path d="M5 15.500 L6.500 11 L9.500 8 L12.500 11 L9.500 14 Z" fill="#e2512d"/><path d="M4.300 16.200 L5.400 13.200 L7.300 15.100 Z" fill="#555"/></svg>
<div class="t" style="left:193px;top:786px;font-size:15px;color:#1a1a1a;letter-spacing:0.300px">[GB/T93]垫圈10*</div>
<div class="a" style="left:139px;top:819px;width:7px;height:1px;background:repeating-linear-gradient(90deg,#9a9a9a 0 1px,transparent 1px 2px)"></div>
<svg style="left:128px;top:814px" width="11" height="11" viewBox="0 0 11 11"><rect x="0.500" y="0.500" width="10" height="10" rx="1" fill="#efefef" stroke="#9a9a9a"/><path d="M2.500 5.500 H8.500" stroke="#3b5ba8" stroke-width="1.400"/><path d="M5.500 2.500 V8.500" stroke="#3b5ba8" stroke-width="1.400"/></svg>
<svg style="left:145px;top:808px" width="22" height="22" viewBox="-11 -11 22 22"><rect x="-2.300" y="-10.500" width="4.600" height="21" fill="#6e6e6e" transform="rotate(0)"/><rect x="-2.300" y="-10.500" width="4.600" height="21" fill="#6e6e6e" transform="rotate(45)"/><rect x="-2.300" y="-10.500" width="4.600" height="21" fill="#6e6e6e" transform="rotate(90)"/><rect x="-2.300" y="-10.500" width="4.600" height="21" fill="#6e6e6e" transform="rotate(135)"/><circle r="7.800" fill="#6e6e6e"/><circle r="3.400" fill="#fff"/></svg>
<svg style="left:167px;top:808px" width="20" height="20" viewBox="0 0 20 20"><rect x="1.500" y="4" width="14.500" height="14.500" fill="#fff" stroke="#8a8a8a" stroke-width="1.400"/><path d="M5 15.500 L6.500 11 L16.500 1 L19.500 4 L9.500 14 Z" fill="#8a8a8a"/><path d="M5 15.500 L6.500 11 L9.500 8 L12.500 11 L9.500 14 Z" fill="#e2512d"/><path d="M4.300 16.200 L5.400 13.200 L7.300 15.100 Z" fill="#555"/></svg>
<div class="t" style="left:193px;top:811px;font-size:15px;color:#1a1a1a;letter-spacing:0.300px">[VS40WH.17.1]上横梁</div>
<div class="a" style="left:139px;top:844px;width:7px;height:1px;background:repeating-linear-gradient(90deg,#9a9a9a 0 1px,transparent 1px 2px)"></div>
<svg style="left:128px;top:839px" width="11" height="11" viewBox="0 0 11 11"><rect x="0.500" y="0.500" width="10" height="10" rx="1" fill="#efefef" stroke="#9a9a9a"/><path d="M2.500 5.500 H8.500" stroke="#3b5ba8" stroke-width="1.400"/><path d="M5.500 2.500 V8.500" stroke="#3b5ba8" stroke-width="1.400"/></svg>
<svg style="left:145px;top:833px" width="22" height="22" viewBox="-11 -11 22 22"><rect x="-2.300" y="-10.500" width="4.600" height="21" fill="#6e6e6e" transform="rotate(0)"/><rect x="-2.300" y="-10.500" width="4.600" height="21" fill="#6e6e6e" transform="rotate(45)"/><rect x="-2.300" y="-10.500" width="4.600" height="21" fill="#6e6e6e" transform="rotate(90)"/><rect x="-2.300" y="-10.500" width="4.600" height="21" fill="#6e6e6e" transform="rotate(135)"/><circle r="7.800" fill="#6e6e6e"/><circle r="3.400" fill="#fff"/></svg>
<svg style="left:167px;top:833px" width="20" height="20" viewBox="0 0 20 20"><rect x="1.500" y="4" width="14.500" height="14.500" fill="#fff" stroke="#8a8a8a" stroke-width="1.400"/><path d="M5 15.500 L6.500 11 L16.500 1 L19.500 4 L9.500 14 Z" fill="#8a8a8a"/><path d="M5 15.500 L6.500 11 L9.500 8 L12.500 11 L9.500 14 Z" fill="#e2512d"/><path d="M4.300 16.200 L5.400 13.200 L7.300 15.100 Z" fill="#555"/></svg>
<div class="t" style="left:193px;top:836px;font-size:15px;color:#1a1a1a;letter-spacing:0.300px">[VS40WH.17.11]导轨防倾翻装置</div>
<div class="a" style="left:139px;top:869px;width:7px;height:1px;background:repeating-linear-gradient(90deg,#9a9a9a 0 1px,transparent 1px 2px)"></div>
<svg style="left:128px;top:864px" width="11" height="11" viewBox="0 0 11 11"><rect x="0.500" y="0.500" width="10" height="10" rx="1" fill="#efefef" stroke="#9a9a9a"/><path d="M2.500 5.500 H8.500" stroke="#3b5ba8" stroke-width="1.400"/><path d="M5.500 2.500 V8.500" stroke="#3b5ba8" stroke-width="1.400"/></svg>
<svg style="left:145px;top:858px" width="22" height="22" viewBox="-11 -11 22 22"><rect x="-2.300" y="-10.500" width="4.600" height="21" fill="#6e6e6e" transform="rotate(0)"/><rect x="-2.300" y="-10.500" width="4.600" height="21" fill="#6e6e6e" transform="rotate(45)"/><rect x="-2.300" y="-10.500" width="4.600" height="21" fill="#6e6e6e" transform="rotate(90)"/><rect x="-2.300" y="-10.500" width="4.600" height="21" fill="#6e6e6e" transform="rotate(135)"/><circle r="7.800" fill="#6e6e6e"/><circle r="3.400" fill="#fff"/></svg>
<svg style="left:167px;top:858px" width="20" height="20" viewBox="0 0 20 20"><rect x="1.500" y="4" width="14.500" height="14.500" fill="#fff" stroke="#8a8a8a" stroke-width="1.400"/><path d="M5 15.500 L6.500 11 L16.500 1 L19.500 4 L9.500 14 Z" fill="#8a8a8a"/><path d="M5 15.500 L6.500 11 L9.500 8 L12.500 11 L9.500 14 Z" fill="#e2512d"/><path d="M4.300 16.200 L5.400 13.200 L7.300 15.100 Z" fill="#555"/></svg>
<div class="t" style="left:193px;top:861px;font-size:15px;color:#1a1a1a;letter-spacing:0.300px">[VS40WH.17.3]行走小车</div>
<div class="a" style="left:139px;top:894px;width:7px;height:1px;background:repeating-linear-gradient(90deg,#9a9a9a 0 1px,transparent 1px 2px)"></div>
<svg style="left:128px;top:889px" width="11" height="11" viewBox="0 0 11 11"><rect x="0.500" y="0.500" width="10" height="10" rx="1" fill="#efefef" stroke="#9a9a9a"/><path d="M2.500 5.500 H8.500" stroke="#3b5ba8" stroke-width="1.400"/><path d="M5.500 2.500 V8.500" stroke="#3b5ba8" stroke-width="1.400"/></svg>
<svg style="left:145px;top:883px" width="22" height="22" viewBox="-11 -11 22 22"><rect x="-2.300" y="-10.500" width="4.600" height="21" fill="#6e6e6e" transform="rotate(0)"/><rect x="-2.300" y="-10.500" width="4.600" height="21" fill="#6e6e6e" transform="rotate(45)"/><rect x="-2.300" y="-10.500" width="4.600" height="21" fill="#6e6e6e" transform="rotate(90)"/><rect x="-2.300" y="-10.500" width="4.600" height="21" fill="#6e6e6e" transform="rotate(135)"/><circle r="7.800" fill="#6e6e6e"/><circle r="3.400" fill="#fff"/></svg>
<svg style="left:167px;top:883px" width="20" height="20" viewBox="0 0 20 20"><rect x="1.500" y="4" width="14.500" height="14.500" fill="#fff" stroke="#8a8a8a" stroke-width="1.400"/><path d="M5 15.500 L6.500 11 L16.500 1 L19.500 4 L9.500 14 Z" fill="#8a8a8a"/><path d="M5 15.500 L6.500 11 L9.500 8 L12.500 11 L9.500 14 Z" fill="#e2512d"/><path d="M4.300 16.200 L5.400 13.200 L7.300 15.100 Z" fill="#555"/></svg>
<div class="t" style="left:193px;top:886px;font-size:15px;color:#1a1a1a;letter-spacing:0.300px">[VS40WH.17.5]机架</div>
<div class="a" style="left:139px;top:919px;width:7px;height:1px;background:repeating-linear-gradient(90deg,#9a9a9a 0 1px,transparent 1px 2px)"></div>
<svg style="left:128px;top:914px" width="11" height="11" viewBox="0 0 11 11"><rect x="0.500" y="0.500" width="10" height="10" rx="1" fill="#efefef" stroke="#9a9a9a"/><path d="M2.500 5.500 H8.500" stroke="#3b5ba8" stroke-width="1.400"/><path d="M5.500 2.500 V8.500" stroke="#3b5ba8" stroke-width="1.400"/></svg>
<svg style="left:145px;top:908px" width="22" height="22" viewBox="-11 -11 22 22"><rect x="-2.300" y="-10.500" width="4.600" height="21" fill="#6e6e6e" transform="rotate(0)"/><rect x="-2.300" y="-10.500" width="4.600" height="21" fill="#6e6e6e" transform="rotate(45)"/><rect x="-2.300" y="-10.500" width="4.600" height="21" fill="#6e6e6e" transform="rotate(90)"/><rect x="-2.300" y="-10.500" width="4.600" height="21" fill="#6e6e6e" transform="rotate(135)"/><circle r="7.800" fill="#6e6e6e"/><circle r="3.400" fill="#fff"/></svg>
<svg style="left:167px;top:908px" width="20" height="20" viewBox="0 0 20 20"><rect x="1.500" y="4" width="14.500" height="14.500" fill="#fff" stroke="#8a8a8a" stroke-width="1.400"/><path d="M5 15.500 L6.500 11 L16.500 1 L19.500 4 L9.500 14 Z" fill="#8a8a8a"/><path d="M5 15.500 L6.500 11 L9.500 8 L12.500 11 L9.500 14 Z" fill="#e2512d"/><path d="M4.300 16.200 L5.400 13.200 L7.300 15.100 Z" fill="#555"/></svg>
<div class="t" style="left:193px;top:911px;font-size:15px;color:#1a1a1a;letter-spacing:0.300px">[VS40WH.17.6]抓箱把</div>
<div class="a" style="left:139px;top:944px;width:7px;height:1px;background:repeating-linear-gradient(90deg,#9a9a9a 0 1px,transparent 1px 2px)"></div>
<svg style="left:128px;top:939px" width="11" height="11" viewBox="0 0 11 11"><rect x="0.500" y="0.500" width="10" height="10" rx="1" fill="#efefef" stroke="#9a9a9a"/><path d="M2.500 5.500 H8.500" stroke="#3b5ba8" stroke-width="1.400"/><path d="M5.500 2.500 V8.500" stroke="#3b5ba8" stroke-width="1.400"/></svg>
<svg style="left:145px;top:933px" width="22" height="22" viewBox="-11 -11 22 22"><rect x="-2.300" y="-10.500" width="4.600" height="21" fill="#6e6e6e" transform="rotate(0)"/><rect x="-2.300" y="-10.500" width="4.600" height="21" fill="#6e6e6e" transform="rotate(45)"/><rect x="-2.300" y="-10.500" width="4.600" height="21" fill="#6e6e6e" transform="rotate(90)"/><rect x="-2.300" y="-10.500" width="4.600" height="21" fill="#6e6e6e" transform="rotate(135)"/><circle r="7.800" fill="#6e6e6e"/><circle r="3.400" fill="#fff"/></svg>
<svg style="left:167px;top:933px" width="20" height="20" viewBox="0 0 20 20"><rect x="1.500" y="4" width="14.500" height="14.500" fill="#fff" stroke="#8a8a8a" stroke-width="1.400"/><path d="M5 15.500 L6.500 11 L16.500 1 L19.500 4 L9.500 14 Z" fill="#8a8a8a"/><path d="M5 15.500 L6.500 11 L9.500 8 L12.500 11 L9.500 14 Z" fill="#e2512d"/><path d="M4.300 16.200 L5.400 13.200 L7.300 15.100 Z" fill="#555"/></svg>
<div class="t" style="left:193px;top:936px;font-size:15px;color:#1a1a1a;letter-spacing:0.300px">[VS40WH.17.7]液压升降系统</div>
<div class="a" style="left:139px;top:969px;width:7px;height:1px;background:repeating-linear-gradient(90deg,#9a9a9a 0 1px,transparent 1px 2px)"></div>
<svg style="left:128px;top:964px" width="11" height="11" viewBox="0 0 11 11"><rect x="0.500" y="0.500" width="10" height="10" rx="1" fill="#efefef" stroke="#9a9a9a"/><path d="M2.500 5.500 H8.500" stroke="#3b5ba8" stroke-width="1.400"/><path d="M5.500 2.500 V8.500" stroke="#3b5ba8" stroke-width="1.400"/></svg>
<svg style="left:145px;top:958px" width="22" height="22" viewBox="-11 -11 22 22"><rect x="-2.300" y="-10.500" width="4.600" height="21" fill="#6e6e6e" transform="rotate(0)"/><rect x="-2.300" y="-10.500" width="4.600" height="21" fill="#6e6e6e" transform="rotate(45)"/><rect x="-2.300" y="-10.500" width="4.600" height="21" fill="#6e6e6e" transform="rotate(90)"/><rect x="-2.300" y="-10.500" width="4.600" height="21" fill="#6e6e6e" transform="rotate(135)"/><circle r="7.800" fill="#6e6e6e"/><circle r="3.400" fill="#fff"/></svg>
<svg style="left:167px;top:958px" width="20" height="20" viewBox="0 0 20 20"><rect x="1.500" y="4" width="14.500" height="14.500" fill="#fff" stroke="#8a8a8a" stroke-width="1.400"/><path d="M5 15.500 L6.500 11 L16.500 1 L19.500 4 L9.500 14 Z" fill="#8a8a8a"/><path d="M5 15.500 L6.500 11 L9.500 8 L12.500 11 L9.500 14 Z" fill="#e2512d"/><path d="M4.300 16.200 L5.400 13.200 L7.300 15.100 Z" fill="#555"/></svg>
<div class="t" style="left:193px;top:961px;font-size:15px;color:#1a1a1a;letter-spacing:0.300px">[VS40WH.17.8]连接座</div>
<div class="a" style="left:0;top:976px;width:487px;height:16px;background:#e8e8e8;overflow:hidden">
<div class="a" style="left:101px;top:0;width:116px;height:16px;background:#f6f6f6;border-left:1px solid #cfcfcf;border-right:1px solid #cfcfcf"></div>
<svg style="left:3px;top:2px" width="22" height="16" viewBox="0 0 22 16"><path d="M1.500 11 L11 1.500 L20.500 11 M5 9 V16 M17 9 V16" fill="none" stroke="#3b78c4" stroke-width="1.800"/></svg>
<div class="t" style="left:27px;top:3px;font-size:16px;color:#444">工作桌面</div>
<svg style="left:108px;top:2px" width="18" height="16" viewBox="0 0 18 16"><rect x="1" y="1" width="9" height="4.500" fill="none" stroke="#3b78c4" stroke-width="1.500"/><path d="M3.500 6 V12 H8" fill="none" stroke="#3b78c4" stroke-width="1.500"/><rect x="8" y="9.500" width="8" height="5" fill="none" stroke="#3b78c4" stroke-width="1.500"/></svg>
<div class="t" style="left:128px;top:3px;font-size:16px;color:#444">产品结构树</div>
<svg style="left:225px;top:2px" width="18" height="16" viewBox="0 0 18 16"><rect x="1" y="1" width="9" height="6.500" fill="none" stroke="#ea8d3f" stroke-width="1.600"/><rect x="6" y="5" width="9" height="7" fill="#f1f1f1" stroke="#777" stroke-width="1.500"/><path d="M10 12 V16" stroke="#777" stroke-width="1.500"/></svg>
<div class="t" style="left:246px;top:3px;font-size:16px;color:#444">项目成果树</div>
<svg style="left:340px;top:2px" width="22" height="16" viewBox="0 0 22 16"><path d="M2 6.500 L11 2 L20 6.500 L11 11 Z M2 11 L11 15.500 L20 11" fill="none" stroke="#3b78c4" stroke-width="1.800"/></svg>
<div class="t" style="left:364px;top:3px;font-size:16px;color:#444">文档树</div>
</div>
<div class="a" style="left:492px;top:196px;width:1388px;height:28px;background:#e5e5e5;border-bottom:1px solid #c9c9c9"></div>
<div class="a" style="left:487px;top:196px;width:5px;height:796px;background:#ededed"></div><div class="a" style="left:488px;top:196px;width:3px;height:796px;background:#e2e2e2"></div>
<div class="t" style="left:501px;top:202px;font-size:16px;color:#444">查询</div>
<div class="t" style="left:575px;top:202px;font-size:16px;color:#444;letter-spacing:-0.7px">零部件_[VS40WH.17.2]导向杆总成</div>
<div class="a" style="left:843px;top:199px;width:167px;height:26px;background:#fbfbfb;border:1px solid #c9c9c9;border-bottom:none"></div>
<div class="t" style="left:849px;top:202px;font-size:17px;color:#222;font-weight:bold;letter-spacing:0.2px">图纸_导向杆总成</div>
<svg style="left:992px;top:206px" width="11" height="11" viewBox="0 0 11 11"><path d="M1.500 1.500 L9.500 9.500 M9.500 1.500 L1.500 9.500" stroke="#555" stroke-width="1.700"/></svg>
<svg style="left:1879px;top:205px" width="8" height="11" viewBox="0 0 8 11"><path d="M6 1 L1.500 5.500 L6 10" fill="none" stroke="#777" stroke-width="1.300"/></svg>
<div class="a" style="left:492px;top:225px;width:394px;height:767px;background:#f0f0f0"></div>
<div class="a" style="left:886px;top:225px;width:4px;height:767px;background:#f4f4f4;border-left:1px solid #dedede;border-right:1px solid #dedede"></div>
<svg style="left:497px;top:230px" width="20" height="20" viewBox="0 0 20 20"><path d="M3.500 9.500 A6.500 6.500 0 0 1 16.300 7.500" fill="none" stroke="#4a86cc" stroke-width="2.400"/><path d="M16.500 10.500 A6.500 6.500 0 0 1 3.700 12.500" fill="none" stroke="#4a86cc" stroke-width="2.400"/><path d="M13 6.500 H19.800 L16.500 11.500 Z M7 13.500 H0.200 L3.500 8.500 Z" fill="#4a86cc"/></svg>
<div class="t" style="left:520px;top:231px;font-size:16px;color:#333">刷新</div>
<svg style="left:564px;top:230px" width="20" height="20" viewBox="0 0 20 20"><path d="M3 17 L4.500 12 L13.500 3 L17 6.500 L8 15.500 Z M11.500 5 L15 8.500" fill="none" stroke="#a9b8c9" stroke-width="1.600"/></svg>
<div class="t" style="left:588px;top:231px;font-size:16px;color:#b0b0b0">编辑</div>
<svg style="left:631px;top:231px" width="20" height="20" viewBox="0 0 20 20"><path d="M2 2 H16 L18 4 V18 H2 Z" fill="none" stroke="#a9b8c9" stroke-width="1.600"/><rect x="5" y="2.500" width="9" height="5" fill="none" stroke="#a9b8c9" stroke-width="1.400"/><rect x="5" y="11" width="10" height="7" fill="none" stroke="#a9b8c9" stroke-width="1.400"/></svg>
<div class="t" style="left:655px;top:231px;font-size:16px;color:#b0b0b0">保存</div>
<svg style="left:698px;top:230px" width="20" height="20" viewBox="0 0 20 20"><circle cx="10" cy="10" r="8.500" fill="none" stroke="#a9b8c9" stroke-width="1.600"/><path d="M6.500 6.500 L13.500 13.500 M13.500 6.500 L6.500 13.500" stroke="#a9b8c9" stroke-width="1.600"/></svg>
<div class="t" style="left:722px;top:231px;font-size:16px;color:#b0b0b0">取消</div>
<svg style="left:766px;top:229px" width="20" height="22" viewBox="0 0 20 22"><path d="M1.500 5 H18.500 M7 4.500 V2 H13 V4.500 M3.500 5.500 V20 H16.500 V5.500 M7.500 9 V17 M10 9 V17 M12.500 9 V17" fill="none" stroke="#a9b8c9" stroke-width="1.500"/></svg>
<div class="t" style="left:789px;top:231px;font-size:16px;color:#b0b0b0">删除</div>
<div class="a" style="left:505px;top:255px;width:24px;height:25px;background:#d2d2d2"></div>
<svg style="left:508px;top:258px" width="18" height="18" viewBox="0 0 18 18"><rect x="1" y="1.500" width="5" height="5" fill="none" stroke="#555" stroke-width="1.400"/><rect x="1" y="11" width="5" height="5" fill="none" stroke="#555" stroke-width="1.400"/><path d="M8 2 H16 M8 5 H14 M8 8 H16 M8 11.500 H16 M8 14.500 H14" stroke="#666" stroke-width="1.200" stroke-dasharray="2 1"/></svg>
<div class="t" style="left:538px;top:256px;font-size:11px;font-weight:bold;color:#3b78c4">A</div>
<div class="t" style="left:538px;top:267px;font-size:11px;font-weight:bold;color:#8e44ad">Z</div>
<svg style="left:546px;top:257px" width="10" height="21" viewBox="0 0 10 21"><path d="M5 1 V19 M1.500 15 L5 19.500 L8.500 15" fill="none" stroke="#555" stroke-width="1.400"/></svg>
<div class="a" style="left:568px;top:254px;width:310px;height:28px;background:#fff;border:1px solid #d4d4d4"></div>
<svg style="left:852px;top:257px" width="20" height="20" viewBox="0 0 20 20"><circle cx="12" cy="7.500" r="5.500" fill="none" stroke="#4a7ebb" stroke-width="1.500"/><path d="M8 11.500 L1.500 18.500" stroke="#4a7ebb" stroke-width="2"/></svg>
<div class="a" style="left:496px;top:286px;width:387px;height:625px;background:#fdfdfd"></div>
<svg style="left:503px;top:292px" width="8" height="8" viewBox="0 0 8 8"><path d="M7 1 V7 H1 Z" fill="#bdbdbd"/></svg>
<div class="t" style="left:520px;top:289px;font-size:15px;font-weight:bold;color:#333">基本属性</div>
<div class="a" style="left:496px;top:306px;width:387px;height:1px;background:#d0d0d0"></div>
<div class="a" style="left:496px;top:346px;width:387px;height:1px;background:#d0d0d0"></div>
<div class="a" style="left:496px;top:366px;width:387px;height:1px;background:#d0d0d0"></div>
<div class="a" style="left:496px;top:386px;width:387px;height:1px;background:#d0d0d0"></div>
<div class="a" style="left:496px;top:406px;width:387px;height:1px;background:#d0d0d0"></div>
<div class="a" style="left:496px;top:426px;width:387px;height:1px;background:#d0d0d0"></div>
<div class="a" style="left:496px;top:446px;width:387px;height:1px;background:#d0d0d0"></div>
<div class="a" style="left:496px;top:466px;width:387px;height:1px;background:#d0d0d0"></div>
<div class="a" style="left:496px;top:486px;width:387px;height:1px;background:#d0d0d0"></div>
<div class="a" style="left:496px;top:506px;width:387px;height:1px;background:#d0d0d0"></div>
<div class="a" style="left:496px;top:526px;width:387px;height:1px;background:#d0d0d0"></div>
<div class="a" style="left:496px;top:566px;width:387px;height:1px;background:#d0d0d0"></div>
<div class="a" style="left:496px;top:586px;width:387px;height:1px;background:#d0d0d0"></div>
<div class="a" style="left:496px;top:606px;width:387px;height:1px;background:#d0d0d0"></div>
<div class="a" style="left:496px;top:666px;width:387px;height:1px;background:#d0d0d0"></div>
<div class="a" style="left:496px;top:910px;width:387px;height:1px;background:#d0d0d0"></div>
<div class="a" style="left:639px;top:306px;width:1px;height:605px;background:#d0d0d0"></div>
<div class="t" style="left:520px;top:309px;font-size:15px;color:#a8a8a8">*名称</div>
<div class="t" style="left:520px;top:349px;font-size:15px;color:#a8a8a8">文件代号</div>
<div class="t" style="left:520px;top:369px;font-size:15px;color:#a8a8a8">文件类型</div>
<div class="t" style="left:520px;top:389px;font-size:15px;color:#a8a8a8">文件状态</div>
<div class="t" style="left:520px;top:409px;font-size:15px;color:#a8a8a8">文件格式</div>
<div class="t" style="left:520px;top:429px;font-size:15px;color:#a8a8a8">页面号</div>
<div class="t" style="left:520px;top:449px;font-size:15px;color:#a8a8a8">页面大小</div>
<div class="t" style="left:520px;top:469px;font-size:15px;color:#a8a8a8">复查员</div>
<div class="t" style="left:520px;top:489px;font-size:15px;color:#a8a8a8">校对</div>
<div class="t" style="left:520px;top:509px;font-size:15px;color:#a8a8a8">保密级别</div>
<div class="t" style="left:520px;top:529px;font-size:15px;color:#a8a8a8">物理位置</div>
<div class="t" style="left:520px;top:569px;font-size:15px;color:#a8a8a8">创建人</div>
<div class="t" style="left:520px;top:589px;font-size:15px;color:#a8a8a8">创建日期</div>
<div class="t" style="left:520px;top:609px;font-size:15px;color:#a8a8a8">描述</div>
<div class="t" style="left:644px;top:309px;font-size:15px;color:#111">导向杆总成</div>
<div class="t" style="left:645px;top:371px;font-size:12.500px;color:#111;font-family:'Liberation Mono',monospace;letter-spacing:0px">dwg</div>
<div class="t" style="left:644px;top:389px;font-size:15px;color:#111">发布</div>
<div class="t" style="left:645px;top:411px;font-size:12.300px;color:#111;font-family:'Liberation Mono',monospace;letter-spacing:0px">AutoCAD</div>
<div class="t" style="left:644px;top:569px;font-size:15px;color:#111">逢增苗</div>
<div class="t" style="left:645px;top:591px;font-size:12.300px;color:#b4b4b4;font-family:'Liberation Mono',monospace">2022/03/07 15:31</div>
<div class="a" style="left:890px;top:225px;width:990px;height:767px;background:#efefef"></div>
<div class="a" style="left:1880px;top:196px;width:7px;height:796px;background:#f0f0f0"></div>
<svg style="left:892px;top:230px" width="20" height="20" viewBox="0 0 20 20"><path d="M3.500 9.500 A6.500 6.500 0 0 1 16.300 7.500" fill="none" stroke="#4a86cc" stroke-width="2.400"/><path d="M16.500 10.500 A6.500 6.500 0 0 1 3.700 12.500" fill="none" stroke="#4a86cc" stroke-width="2.400"/><path d="M13 6.500 H19.800 L16.500 11.500 Z M7 13.500 H0.200 L3.500 8.500 Z" fill="#4a86cc"/></svg>
<div class="t" style="left:915px;top:231px;font-size:16px;color:#333">刷新</div>
<svg style="left:960px;top:231px" width="19" height="19" viewBox="0 0 19 19"><path d="M1.500 6.500 V1.500 H6.500 M12.500 1.500 H17.500 V6.500 M17.500 12.500 V17.500 H12.500 M6.500 17.500 H1.500 V12.500 M2 2 L7.500 7.500 M17 2 L11.500 7.500 M17 17 L11.500 11.500 M2 17 L7.500 11.500" fill="none" stroke="#3b78c4" stroke-width="1.600"/></svg>
<div class="t" style="left:984px;top:231px;font-size:16px;color:#333">全屏</div>
<svg style="left:1028px;top:231px" width="19" height="19" viewBox="0 0 19 19"><path d="M1.500 1.500 H17.500 V17.500 H1.500 Z" fill="none" stroke="#8a8a8a" stroke-width="1.300" stroke-dasharray="3 2"/><rect x="1.500" y="11" width="6.500" height="6.500" fill="#efefef" stroke="#777" stroke-width="1.300"/><path d="M8 11 L14.500 4.500 M10 4.500 H14.500 V9" fill="none" stroke="#777" stroke-width="1.400"/></svg>
<div class="t" style="left:1050px;top:231px;font-size:16px;color:#333">弹出浏览</div>
<svg style="left:1127px;top:231px" width="20" height="19" viewBox="0 0 20 19"><rect x="1" y="1.500" width="13" height="11" fill="#f8f8f8" stroke="#8a8a8a" stroke-width="1.400"/><rect x="7.500" y="7" width="11.500" height="10.500" fill="#f8f8f8" stroke="#777" stroke-width="1.400"/><path d="M10 11 H11.500 M13 11 H17 M10 14 H11.500 M13 14 H17" stroke="#777" stroke-width="1.300"/></svg>
<div class="t" style="left:1151px;top:231px;font-size:16px;color:#333">配置</div>
<svg style="left:1195px;top:232px" width="20" height="17" viewBox="0 0 20 17"><path d="M1.500 5 V1.500 H6 M14 1.500 H18.500 V5 M18.500 12 V15.500 H14 M6 15.500 H1.500 V12" fill="none" stroke="#c0c0c0" stroke-width="1.400"/><rect x="5.500" y="5" width="9" height="7" fill="none" stroke="#c0c0c0" stroke-width="1.300"/></svg>
<div class="t" style="left:1219px;top:231px;font-size:16px;color:#b0b0b0">模板</div>
<div class="a" style="left:1271px;top:229px;width:363px;height:23px;background:#fff"></div>
<div class="t" style="left:1272px;top:233px;font-size:15px;color:#555;letter-spacing:-0.200px">导向杆总成.dwg</div>
<div class="a" style="left:1634px;top:229px;width:28px;height:23px;background:#ececec"></div>
<svg style="left:1638px;top:233px" width="20" height="15" viewBox="0 0 20 15"><path d="M1 14 V2.500 H7 L9 4.500 H16 V7" fill="#dadada" stroke="#d0d0d0"/><path d="M1 14 L4.500 6.500 H19 L16 14 Z" fill="#e0e0e0" stroke="#d2d2d2"/></svg>
<div class="a" style="left:893px;top:261px;width:270px;height:32px;background:#f0f0f0;border:1px solid #fff;border-right-color:#b8b8b8;border-bottom-color:#b8b8b8"></div>
<div class="a" style="left:1091px;top:261px;width:1px;height:31px;background:#b8b8b8"></div>
<div class="a" style="left:1092px;top:261px;width:1px;height:31px;background:#fff"></div>
<div class="a" style="left:898px;top:264px;width:2px;height:26px;border-left:1px solid #fff;border-right:1px solid #8f8f8f"></div>
<div class="a" style="left:902px;top:264px;width:2px;height:26px;border-left:1px solid #fff;border-right:1px solid #8f8f8f"></div>
<div class="a" style="left:1096px;top:264px;width:2px;height:26px;border-left:1px solid #fff;border-right:1px solid #8f8f8f"></div>
<div class="a" style="left:1100px;top:264px;width:2px;height:26px;border-left:1px solid #fff;border-right:1px solid #8f8f8f"></div>
<div class="a" style="left:1052px;top:264px;width:2px;height:26px;border-left:1px solid #9a9a9a;border-right:1px solid #fff"></div>
<svg style="left:907px;top:265px" width="24" height="24" viewBox="0 0 24 24"><path d="M6 12 C4 9 6.500 7.500 8.500 10 L11 13 C11 9 12.500 5.500 15 6 C17 6 18 7 21 9.500 C23 12 22.500 17 20 19.500 C17 22.500 10.500 22 8 18.500 Z" fill="#fff" stroke="#555" stroke-width="1.200"/><path d="M4.500 1.500 V8 M1.500 4.500 H8" stroke="#333" stroke-width="1.200"/><path d="M13.500 10 L15.500 13 M16.500 9 L18.500 12" stroke="#777"/></svg>
<svg style="left:935px;top:266px" width="24" height="24" viewBox="0 0 24 24"><path d="M9.500 13.500 L2.500 20.500" stroke="#6a6a6a" stroke-width="3"/><circle cx="14" cy="9" r="6.800" fill="#dcf8fc" stroke="#9aa4a8" stroke-width="1.100"/></svg>
<svg style="left:964px;top:266px" width="24" height="24" viewBox="0 0 24 24"><path d="M9.500 13.500 L2.500 20.500" stroke="#6a6a6a" stroke-width="3"/><circle cx="14" cy="9" r="6.800" fill="#dcf8fc" stroke="#9aa4a8" stroke-width="1.100"/><rect x="10.500" y="5.500" width="7" height="7" fill="none" stroke="#666" stroke-width="1.100"/></svg>
<svg style="left:993px;top:266px" width="24" height="24" viewBox="0 0 24 24"><path d="M9.500 13.500 L2.500 20.500" stroke="#6a6a6a" stroke-width="3"/><circle cx="14" cy="9" r="6.800" fill="#dcf8fc" stroke="#9aa4a8" stroke-width="1.100"/><path d="M11 5 H15.500 L17 6.500 V13 H11 Z" fill="#fff" stroke="#666" stroke-width="1"/></svg>
<svg style="left:1021px;top:266px" width="24" height="24" viewBox="0 0 24 24"><path d="M9.500 13.500 L2.500 20.500" stroke="#6a6a6a" stroke-width="3"/><circle cx="14" cy="9" r="6.800" fill="#dcf8fc" stroke="#9aa4a8" stroke-width="1.100"/><path d="M17 3 A7 7 0 0 1 21 10 M21 10 L18.500 8 M21 10 L22.500 7" fill="none" stroke="#444" stroke-width="1.200"/><circle cx="16" cy="7" r="1" fill="#333"/></svg>
<svg style="left:1062px;top:267px" width="20" height="20" viewBox="0 0 20 20"><rect x="2.500" y="3.500" width="13.500" height="13.500" fill="#fff" stroke="#b4b4b4" stroke-width="1.200"/><path d="M6 10.500 L9 14 L17 5" fill="none" stroke="#2fae2f" stroke-width="2.600"/></svg>
<svg style="left:1105px;top:268px" width="22" height="18" viewBox="0 0 22 18"><path d="M1.500 1 V8 M20.500 1 V8 M1.500 4.500 H20.500 M4 2.500 L1.500 4.500 L4 6.500 M18 2.500 L20.500 4.500 L18 6.500" fill="none" stroke="#444" stroke-width="1.200"/><rect x="1" y="10" width="20" height="6.500" rx="1" fill="#f2b630" stroke="#c98a12"/><path d="M4 10 V13 M7 10 V12 M10 10 V13 M13 10 V12 M16 10 V13 M19 10 V12" stroke="#8a5a00" stroke-width="0.800"/></svg>
<svg style="left:1134px;top:265px" width="24" height="24" viewBox="0 0 24 24"><path d="M3.500 2 V20.500 H22 M1.500 4.500 L3.500 1.500 L5.500 4.500 M19.500 18.500 L22.500 20.500 L19.500 22.500" fill="none" stroke="#333" stroke-width="1.300"/><path d="M3.500 20.500 L11 9" stroke="#333" stroke-width="1.200"/><circle cx="14" cy="8" r="4.200" fill="#eef9fb" stroke="#333" stroke-width="1.200"/><path d="M17 11 L21 15" stroke="#333" stroke-width="1.800"/></svg>
<div class="a" style="left:893px;top:294px;width:987px;height:625px;background:#000;border-left:2px solid #a0a0a0;border-top:2px solid #a0a0a0;border-right:1px solid #e3e3e3;border-bottom:1px solid #e3e3e3"></div>
<div class="a" style="left:893px;top:919px;width:987px;height:22px;background:#f9f9f9;border-bottom:1px solid #dcdcdc"></div>
<div class="a" style="left:894px;top:921px;width:19px;height:18px;background:#f0f0f0;border:1px solid #fff;border-right-color:#8c8c8c;border-bottom-color:#8c8c8c"></div>
<svg style="left:897px;top:923px" width="14" height="14" viewBox="0 0 14 14"><path d="M4 3 V11" stroke="#333" stroke-width="1.300"/><path d="M10.500 3 L5.500 7 L10.500 11 Z" fill="#333"/></svg>
<div class="a" style="left:914px;top:921px;width:19px;height:18px;background:#f0f0f0;border:1px solid #fff;border-right-color:#8c8c8c;border-bottom-color:#8c8c8c"></div>
<svg style="left:917px;top:923px" width="14" height="14" viewBox="0 0 14 14"><path d="M9.500 3 L4.500 7 L9.500 11 Z" fill="#333"/></svg>
<div class="a" style="left:934px;top:921px;width:19px;height:18px;background:#f0f0f0;border:1px solid #fff;border-right-color:#8c8c8c;border-bottom-color:#8c8c8c"></div>
<svg style="left:937px;top:923px" width="14" height="14" viewBox="0 0 14 14"><path d="M4.500 3 L9.500 7 L4.500 11 Z" fill="#333"/></svg>
<div class="a" style="left:954px;top:921px;width:19px;height:18px;background:#f0f0f0;border:1px solid #fff;border-right-color:#8c8c8c;border-bottom-color:#8c8c8c"></div>
<svg style="left:957px;top:923px" width="14" height="14" viewBox="0 0 14 14"><path d="M10 3 V11" stroke="#333" stroke-width="1.300"/><path d="M3.500 3 L8.500 7 L3.500 11 Z" fill="#333"/></svg>
<svg style="left:976px;top:919px" width="140" height="22" viewBox="0 0 140 22"><path d="M54 1 H133 L125 20.500 H62 Z" fill="#f4f4f4" stroke="#333" stroke-width="1.100"/><path d="M2 0.500 L11 20.500 H47 L56 0.500" fill="#fff" stroke="#222" stroke-width="1.300"/></svg>
<div class="t" style="left:990px;top:922px;font-size:15px;font-weight:bold;color:#111">模型</div>
<div class="t" style="left:1039px;top:922px;font-size:15px;color:#222">Layout1</div>
<div class="t" style="left:1438px;top:949px;font-size:15.500px;color:#8d8d8d;letter-spacing:-0.100px">X:3084.692, Y:-148.240</div>
<div class="t" style="left:1705px;top:949px;font-size:15px;color:#333">正交</div>
<div class="t" style="left:1757px;top:949px;font-size:15px;color:#333">线宽</div>
<div class="t" style="left:1810px;top:949px;font-size:15px;color:#333">动态输入</div>
<div class="a" style="left:890px;top:975px;width:990px;height:17px;background:#e5e5e5;border-top:2px solid #d9d9d9;overflow:hidden">
<div class="a" style="left:0px;top:0px;width:43px;height:18px;background:#f6f6f6;border-right:1px solid #cfcfcf"></div>
<div class="t" style="left:7px;top:3px;font-size:16px;color:#555">浏览</div>
<div class="t" style="left:56px;top:3px;font-size:16px;color:#555">轻量化浏览</div>
<div class="t" style="left:155px;top:3px;font-size:16px;color:#555">工作版本</div>
<div class="t" style="left:235px;top:3px;font-size:16px;color:#555">外部引用</div>
<div class="t" style="left:316px;top:3px;font-size:16px;color:#555">哪里被引用</div>
<div class="t" style="left:414px;top:3px;font-size:16px;color:#555">关联文件</div>
<div class="t" style="left:495px;top:3px;font-size:16px;color:#555">借用信息</div>
<div class="t" style="left:576px;top:3px;font-size:16px;color:#555">流程</div>
<div class="t" style="left:625px;top:3px;font-size:16px;color:#555">快照</div>
<svg style="left:944px;top:6px" width="46" height="12" viewBox="0 0 46 12"><path d="M2 2 V10" stroke="#999" stroke-width="1.300"/><path d="M8 2 L3.500 6 L8 10 Z" fill="#aaa"/><path d="M28 2 L23.500 6 L28 10 Z" fill="none" stroke="#aaa"/><path d="M41 2 L45.500 6 L41 10 Z" fill="none" stroke="#aaa"/></svg>
</div>
<svg style="left:0;top:0" width="1909" height="1042" viewBox="0 0 1909 1042">
<defs><pattern id="hy" width="3" height="3" patternUnits="userSpaceOnUse" patternTransform="rotate(-45)"><rect width="3" height="3" fill="#000"/><rect width="1.600" height="3" fill="#ffff00"/></pattern><pattern id="hy2" width="2.400" height="2.400" patternUnits="userSpaceOnUse" patternTransform="rotate(-45)"><rect width="2.400" height="2.400" fill="#ffff00"/><rect width="0.800" height="2.400" fill="#fff"/></pattern></defs>
<rect x="981.5" y="321.5" width="813.0" height="574.0" fill="none" stroke="#ffffff" stroke-width="1.2"/>
<rect x="990.5" y="330.5" width="794.0" height="554.0" fill="none" stroke="#ffffff" stroke-width="2.4"/>
<rect x="990.5" y="330.5" width="96.5" height="18.5" fill="none" stroke="#ffffff" stroke-width="1.2"/>
<rect x="1072.0" y="485.0" width="580.0" height="4.6" fill="#ffffff" stroke="none" stroke-width="0.0"/>
<rect x="1072.0" y="512.3" width="580.0" height="4.6" fill="#ffffff" stroke="none" stroke-width="0.0"/>
<path d="M1651.0 487.0 L1651.0 515.0" stroke="#ffffff" stroke-width="2.0" fill="none"/>
<path d="M1024 501 H1702" stroke="#ff0000" stroke-width="2.400" stroke-dasharray="11 2 3 2" fill="none"/>
<circle cx="1043.700" cy="503.400" r="30.600" fill="none" stroke="#e8a878" stroke-width="1.600"/>
<path d="M1023 489 H1027 V483 H1034 V488 H1070 V492 H1046 V510 H1070 V515 H1034 V521 H1027 V515 H1023 V508 H1020 V496 H1023 Z" fill="#fff"/>
<path d="M1025 491 H1028 V485 H1033 V490 H1044 V513 H1033 V519 H1028 V513 H1025 Z" fill="#ffff00"/>
<path d="M1038 489 H1066 V491.500 H1038 Z M1038 511 H1066 V513.500 H1038 Z" fill="url(#hy2)"/>
<rect x="1048.0" y="493.0" width="13.0" height="16.0" fill="#000" stroke="none" stroke-width="0.0"/>
<path d="M1021 492 h3 v4 h-3 Z M1021 507 h3 v4 h-3 Z" fill="#ff00ff"/>
<path d="M1024 494.500 H1050 M1024 508.500 H1040" stroke="#ff0000" stroke-width="1.500" stroke-dasharray="6 1.500" fill="none"/>
<path d="M1024 501 H1070" stroke="#ff0000" stroke-width="1.800" stroke-dasharray="9 2 3 2" fill="none"/>
<path d="M1054.9 419.0 L1054.9 515.0" stroke="#00ffff" stroke-width="2.0" fill="none"/>
<path d="M1063.0 492.0 L1063.0 512.0" stroke="#00ffff" stroke-width="1.2" fill="none"/>
<path d="M1074.5 422.0 L1074.5 516.0" stroke="#00ffff" stroke-width="2.0" fill="none"/>
<path d="M1072.5 514.0 L1072.5 544.0" stroke="#00ffff" stroke-width="2.0" fill="none"/>
<path d="M1168.4 426.0 L1168.4 516.0" stroke="#00ffff" stroke-width="2.0" fill="none"/>
<path d="M1163.5 487.0 L1173.5 487.0" stroke="#00ffff" stroke-width="2.0" fill="none"/>
<path d="M1163.5 514.6 L1173.5 514.6" stroke="#00ffff" stroke-width="2.0" fill="none"/>
<path d="M1070.0 487.0 L1080.0 487.0" stroke="#00ffff" stroke-width="2.0" fill="none"/>
<path d="M1070.0 514.6 L1080.0 514.6" stroke="#00ffff" stroke-width="2.0" fill="none"/>
<path d="M1036.0 515.5 L1072.0 515.5" stroke="#00ffff" stroke-width="2.0" fill="none"/>
<path d="M1026.4 516.0 L1026.4 585.0" stroke="#00ffff" stroke-width="2.0" fill="none"/>
<path d="M1036.0 516.0 L1036.0 565.0" stroke="#00ffff" stroke-width="2.0" fill="none"/>
<path d="M1037.0 538.6 L1686.0 538.6" stroke="#00ffff" stroke-width="2.0" fill="none"/>
<path d="M1036.0 559.8 L1688.0 559.8" stroke="#00ffff" stroke-width="2.0" fill="none"/>
<path d="M1026.4 579.8 L1697.4 579.8" stroke="#00ffff" stroke-width="2.0" fill="none"/>
<path d="M1072.500 520 L1114.600 604.700 H1137" stroke="#00ffff" stroke-width="2" fill="none"/>
<rect x="1048.0" y="529.0" width="12.8" height="8.0" fill="none" stroke="#00ff00" stroke-width="1.2"/>
<rect x="1352.5" y="529.0" width="19.5" height="7.5" fill="none" stroke="#00ff00" stroke-width="1.2"/>
<rect x="1352.5" y="549.5" width="19.5" height="7.5" fill="none" stroke="#00ff00" stroke-width="1.2"/>
<rect x="1352.5" y="569.5" width="19.5" height="7.5" fill="none" stroke="#00ff00" stroke-width="1.2"/>
<path d="M1038.0 423.0 C1041.0 420.0 1049.5 420.0 1052.5 423.0" stroke="#00ff00" stroke-width="1.300" fill="none"/>
<path d="M1038.5 426.0 L1052.0 426.0" stroke="#00ff00" stroke-width="1.5" fill="none"/>
<path d="M1038.5 430.6 L1052.0 430.6" stroke="#00ff00" stroke-width="1.5" fill="none"/>
<path d="M1038.5 435.2 L1052.0 435.2" stroke="#00ff00" stroke-width="1.5" fill="none"/>
<path d="M1038.5 439.8 L1052.0 439.8" stroke="#00ff00" stroke-width="1.5" fill="none"/>
<path d="M1038.5 444.4 L1052.0 444.4" stroke="#00ff00" stroke-width="1.5" fill="none"/>
<path d="M1038.0 424.0 V447.0 M1052.5 424.0 V447.0 M1045.2 426.0 V445.0" stroke="#00ff00" stroke-width="1.100" fill="none"/>
<path d="M1043.0 452.0 L1051.0 452.0" stroke="#00ff00" stroke-width="1.7" fill="none"/>
<path d="M1043.0 456.6 L1051.0 456.6" stroke="#00ff00" stroke-width="1.7" fill="none"/>
<path d="M1043.0 461.2 L1051.0 461.2" stroke="#00ff00" stroke-width="1.7" fill="none"/>
<path d="M1043.0 465.8 L1051.0 465.8" stroke="#00ff00" stroke-width="1.7" fill="none"/>
<path d="M1043.0 470.4 L1051.0 470.4" stroke="#00ff00" stroke-width="1.7" fill="none"/>
<path d="M1043.0 475.0 L1051.0 475.0" stroke="#00ff00" stroke-width="1.7" fill="none"/>
<path d="M1043.0 479.6 L1051.0 479.6" stroke="#00ff00" stroke-width="1.7" fill="none"/>
<path d="M1059.0 427.0 C1063.0 423.0 1069.5 423.0 1073.5 427.0" stroke="#00ff00" stroke-width="1.300" fill="none"/>
<rect x="1060.0" y="433.0" width="12.5" height="17.5" fill="none" stroke="#00ff00" stroke-width="1.3"/>
<path d="M1064.8 433.0 L1064.8 450.5" stroke="#00ff00" stroke-width="1.1" fill="none"/>
<path d="M1067.8 433.0 L1067.8 450.5" stroke="#00ff00" stroke-width="1.1" fill="none"/>
<path d="M1058.5 450.5 L1074.0 450.5" stroke="#00ff00" stroke-width="2.0" fill="none"/>
<rect x="1065.4" y="450.5" width="6.3" height="20.2" fill="none" stroke="#00ff00" stroke-width="1.2"/>
<path d="M1151.0 432.5 C1155.0 428.5 1161.0 428.5 1165.0 432.5" stroke="#00ff00" stroke-width="1.300" fill="none"/>
<rect x="1152.0" y="436.0" width="12.0" height="19.0" fill="none" stroke="#00ff00" stroke-width="1.3"/>
<path d="M1156.5 436.0 L1156.5 455.0" stroke="#00ff00" stroke-width="1.1" fill="none"/>
<path d="M1159.5 436.0 L1159.5 455.0" stroke="#00ff00" stroke-width="1.1" fill="none"/>
<path d="M1150.5 455.0 L1165.5 455.0" stroke="#00ff00" stroke-width="2.0" fill="none"/>
<rect x="1155.0" y="455.0" width="8.5" height="20.5" fill="none" stroke="#00ff00" stroke-width="1.2"/>
<path d="M1658.5 419.0 C1661.5 416.0 1671.5 416.0 1674.5 419.0" stroke="#00ff00" stroke-width="1.300" fill="none"/>
<path d="M1659.0 422.0 L1674.0 422.0" stroke="#00ff00" stroke-width="1.5" fill="none"/>
<path d="M1659.0 426.6 L1674.0 426.6" stroke="#00ff00" stroke-width="1.5" fill="none"/>
<path d="M1659.0 431.2 L1674.0 431.2" stroke="#00ff00" stroke-width="1.5" fill="none"/>
<path d="M1659.0 435.8 L1674.0 435.8" stroke="#00ff00" stroke-width="1.5" fill="none"/>
<path d="M1659.0 440.4 L1674.0 440.4" stroke="#00ff00" stroke-width="1.5" fill="none"/>
<path d="M1658.5 420.0 V443.0 M1674.5 420.0 V443.0 M1666.5 422.0 V441.0" stroke="#00ff00" stroke-width="1.100" fill="none"/>
<path d="M1663.5 448.0 L1673.0 448.0" stroke="#00ff00" stroke-width="1.7" fill="none"/>
<path d="M1663.5 452.6 L1673.0 452.6" stroke="#00ff00" stroke-width="1.7" fill="none"/>
<path d="M1663.5 457.2 L1673.0 457.2" stroke="#00ff00" stroke-width="1.7" fill="none"/>
<path d="M1663.5 461.8 L1673.0 461.8" stroke="#00ff00" stroke-width="1.7" fill="none"/>
<path d="M1663.5 466.4 L1673.0 466.4" stroke="#00ff00" stroke-width="1.7" fill="none"/>
<path d="M1663.5 471.0 L1673.0 471.0" stroke="#00ff00" stroke-width="1.7" fill="none"/>
<path d="M1663.5 475.6 L1673.0 475.6" stroke="#00ff00" stroke-width="1.7" fill="none"/>
<path d="M1641.6 428.0 C1645.6 424.0 1652.5 424.0 1656.5 428.0" stroke="#00ff00" stroke-width="1.300" fill="none"/>
<rect x="1642.6" y="432.6" width="12.9" height="18.4" fill="none" stroke="#00ff00" stroke-width="1.3"/>
<path d="M1647.5 432.6 L1647.5 451.0" stroke="#00ff00" stroke-width="1.1" fill="none"/>
<path d="M1650.5 432.6 L1650.5 451.0" stroke="#00ff00" stroke-width="1.1" fill="none"/>
<path d="M1641.1 451.0 L1657.0 451.0" stroke="#00ff00" stroke-width="2.0" fill="none"/>
<rect x="1647.8" y="451.0" width="6.7" height="19.6" fill="none" stroke="#00ff00" stroke-width="1.2"/>
<path d="M1657.4 415.4 L1657.4 516.0" stroke="#00ffff" stroke-width="2.0" fill="none"/>
<path d="M1676.6 415.4 L1676.6 516.0" stroke="#00ffff" stroke-width="2.0" fill="none"/>
<path d="M1657.4 415.8 L1676.6 415.8" stroke="#00ffff" stroke-width="1.2" fill="none"/>
<path d="M1651.0 507.5 L1651.0 544.0" stroke="#00ffff" stroke-width="2.0" fill="none"/>
<path d="M1687.6 515.0 L1687.6 565.0" stroke="#00ffff" stroke-width="2.0" fill="none"/>
<path d="M1697.4 519.0 L1697.4 585.0" stroke="#00ffff" stroke-width="2.0" fill="none"/>
<path d="M1655.0 515.5 L1690.0 515.5" stroke="#00ffff" stroke-width="2.0" fill="none"/>
<path d="M1655.0 487.0 L1680.0 487.0" stroke="#00ffff" stroke-width="2.0" fill="none"/>
<path d="M1655 489 H1690 V484 L1694 481 H1698 V487 H1704 V497 H1702 V506 H1704 V514 H1698 V521 H1692 L1690 517 V513 H1655 Z" fill="#fff"/>
<rect x="1656.0" y="491.0" width="19.0" height="21.0" fill="#000" stroke="none" stroke-width="0.0"/>
<path d="M1662 489 H1676 V492 H1662 Z M1662 510 H1676 V513 H1662 Z" fill="url(#hy2)"/>
<path d="M1678 490 H1686 V512 H1678 Z" fill="url(#hy2)"/>
<path d="M1688 488 L1693 483 H1697 V519 H1693 L1688 514 Z" fill="#ffff00"/>
<path d="M1659 492 V511 M1664 493 C1668 497 1668 506 1664 510" stroke="#00ffff" stroke-width="1.200" fill="none"/>
<path d="M1700 490 h4 v5 h-4 Z M1700 506 h4 v4 h-4 Z" fill="#ff00ff"/>
<path d="M1686 493.500 H1701 M1686 508.500 H1701" stroke="#ff0000" stroke-width="1.500" fill="none"/>
<path d="M1622 501 H1702" stroke="#ff0000" stroke-width="1.800" stroke-dasharray="9 2 3 2" fill="none"/>
<path d="M1658.5 524.0 L1658.5 534.5" stroke="#00ff00" stroke-width="1.8" fill="none"/>
<path d="M1663.3 526.0 L1663.3 534.5" stroke="#00ff00" stroke-width="1.8" fill="none"/>
<path d="M1668.1 526.0 L1668.1 534.5" stroke="#00ff00" stroke-width="1.8" fill="none"/>
<path d="M1672.9 526.0 L1672.9 534.5" stroke="#00ff00" stroke-width="1.8" fill="none"/>
<path d="M1677.7 524.0 L1677.7 534.5" stroke="#00ff00" stroke-width="1.8" fill="none"/>
<path d="M1432 495 L1451 446 H1474" stroke="#00ffff" stroke-width="2" fill="none"/>
<path d="M1461.500 433 v8 M1460 434.500 l1.500 -1.500" stroke="#00ff00" stroke-width="1.500" fill="none"/>
<path d="M1693.900 486.400 L1731 435 H1753.500" stroke="#00ffff" stroke-width="2" fill="none"/>
<path d="M1740.500 422.500 c1 -2.500 5.500 -2.500 5.500 0.500 c0 2.500 -5 3 -5.500 7.500 h6" stroke="#00ff00" stroke-width="1.500" fill="none"/>
<path d="M1704.500 509.800 L1745.700 494" stroke="#00ffff" stroke-width="2" fill="none"/>
<circle cx="1755" cy="491.200" r="9.200" fill="none" stroke="#00ffff" stroke-width="1.500"/><circle cx="1755" cy="510.400" r="9.200" fill="none" stroke="#00ffff" stroke-width="1.500"/>
<path d="M1752.500 486.500 h4 v9.500 h-4 M1753.500 491 h3" stroke="#00ff00" stroke-width="1.400" fill="none"/>
<path d="M1757 505.500 c-3.500 0 -4.500 4 -4.500 6.500 c0 4 5.500 4 5.500 0.500 c0 -3 -5 -3 -5.500 0" stroke="#00ff00" stroke-width="1.400" fill="none"/>
<path d="M933 648 V685 H971 M929.500 656 L933 648 L936.500 656 M963 681.500 L971 685 L963 688.500" stroke="#e020e0" stroke-width="1.300" fill="none"/>
<path d="M1215.4 666.0 L1215.4 674.5" stroke="#00ff00" stroke-width="1.2" fill="none"/>
<path d="M1213.0 674.5 L1229.0 674.5" stroke="#ffffff" stroke-width="1.6" fill="none"/>
<text x="1205" y="694" font-family="Liberation Sans, sans-serif" font-size="18" fill="#00ff00" textLength="30" lengthAdjust="spacingAndGlyphs">放大</text>
<path d="M1165 709 q0 -2 2 -2 h16 q2 0 2 2 v6 h7 q2 0 2 2 v5 h70 v12 h-70 v45 h70 v12 h-70 v4 q0 2 -2 2 h-7 v7 q0 2 -2 2 h-16 q-2 0 -2 -2 v-20 h-10 q-3 0 -3 -3 v-13 q0 -3 3 -3 h10 v-20 h-10 q-3 0 -3 -3 v-13 q0 -3 3 -3 h10 Z" fill="#fff"/>
<path d="M1167.500 710 h15.500 v8 h8.500 v6.500 h71 v8 h-71 v1 h-24 Z M1167.500 803 h15.500 v-8 h8.500 v-6.500 h71 v-8 h-71 v-1 h-24 Z" fill="#ffff00"/>
<path d="M1169 712 h13 v22 h-13 Z M1169 801 h13 v-22 h-13 Z" fill="url(#hy)"/>
<path d="M1196 725.500 h66 v3 h-66 Z M1196 784 h66 v3 h-66 Z" fill="url(#hy)"/>
<rect x="1167.5" y="739.6" width="52.5" height="32.3" fill="#ffff00" stroke="none" stroke-width="0.0"/>
<path d="M1170 741 h14 v29.500 h-14 Z M1194 743 h23 v10 h-23 Z M1194 759 h23 v9 h-23 Z" fill="url(#hy)"/>
<rect x="1220.0" y="733.5" width="42.0" height="45.5" fill="#000" stroke="none" stroke-width="0.0"/>
<path d="M1166 734 h26 M1166 778 h26 M1187 729 v12 M1187 771 v12" stroke="#00ffff" stroke-width="2" stroke-dasharray="3 1.500" fill="none"/>
<path d="M1155.500 731.500 h7 v10 h-7 Z M1155.500 770 h7 v10 h-7 Z" fill="#ff00ff"/>
<path d="M1163.500 736.200 H1225 M1163.500 775.300 H1225" stroke="#ff0000" stroke-width="1.800" stroke-dasharray="16 2 4 2" fill="none"/>
<path d="M1158.500 756.400 H1274.500" stroke="#ff0000" stroke-width="1.800" stroke-dasharray="14 2 4 2" fill="none"/>
<path d="M1261.500 728 C1264.500 745 1265 765 1259.500 779" stroke="#00ffff" stroke-width="2" fill="none"/>
<text x="1110" y="831" font-family="Liberation Sans, sans-serif" font-size="17" fill="#00ff00" textLength="52" lengthAdjust="spacingAndGlyphs">技术要求</text>
<text x="1101" y="853" font-family="Liberation Sans, sans-serif" font-size="12.500" fill="#00ff00" textLength="155" lengthAdjust="spacingAndGlyphs">1、装配时及运输时注意保护镀铬层;</text>
<path d="M1435.8 695.2 L1782.7 695.2" stroke="#ffffff" stroke-width="1.2" fill="none"/>
<path d="M1435.8 708.9 L1782.7 708.9" stroke="#ffffff" stroke-width="1.2" fill="none"/>
<path d="M1435.8 723.3 L1782.7 723.3" stroke="#ffffff" stroke-width="1.2" fill="none"/>
<path d="M1435.8 737.0 L1782.7 737.0" stroke="#ffffff" stroke-width="1.2" fill="none"/>
<path d="M1435.8 750.7 L1782.7 750.7" stroke="#ffffff" stroke-width="1.2" fill="none"/>
<path d="M1435.8 776.5 L1782.7 776.5" stroke="#ffffff" stroke-width="1.2" fill="none"/>
<path d="M1435.8 695.2 L1435.8 776.5" stroke="#ffffff" stroke-width="1.2" fill="none"/>
<path d="M1452.0 695.2 L1452.0 776.5" stroke="#ffffff" stroke-width="1.2" fill="none"/>
<path d="M1525.6 695.2 L1525.6 776.5" stroke="#ffffff" stroke-width="1.2" fill="none"/>
<path d="M1606.8 695.2 L1606.8 776.5" stroke="#ffffff" stroke-width="1.2" fill="none"/>
<path d="M1621.6 695.2 L1621.6 776.5" stroke="#ffffff" stroke-width="1.2" fill="none"/>
<path d="M1688.0 695.2 L1688.0 776.5" stroke="#ffffff" stroke-width="1.2" fill="none"/>
<path d="M1710.9 695.2 L1710.9 776.5" stroke="#ffffff" stroke-width="1.2" fill="none"/>
<path d="M1734.5 695.2 L1734.5 776.5" stroke="#ffffff" stroke-width="1.2" fill="none"/>
<path d="M1761.6 695.2 L1761.6 776.5" stroke="#ffffff" stroke-width="1.2" fill="none"/>
<path d="M1782.7 695.2 L1782.7 776.5" stroke="#ffffff" stroke-width="1.2" fill="none"/>
<rect x="1442.5" y="698.5" width="3.0" height="7.0" fill="none" stroke="#fff" stroke-width="1"/>
<rect x="1612.5" y="698.5" width="3.0" height="7.0" fill="none" stroke="#fff" stroke-width="1"/>
<rect x="1442.5" y="712.6" width="3.0" height="7.0" fill="none" stroke="#fff" stroke-width="1"/>
<rect x="1612.5" y="712.6" width="3.0" height="7.0" fill="none" stroke="#fff" stroke-width="1"/>
<rect x="1442.5" y="726.6" width="3.0" height="7.0" fill="none" stroke="#fff" stroke-width="1"/>
<rect x="1612.5" y="726.6" width="3.0" height="7.0" fill="none" stroke="#fff" stroke-width="1"/>
<rect x="1442.5" y="740.4" width="3.0" height="7.0" fill="none" stroke="#fff" stroke-width="1"/>
<rect x="1612.5" y="740.4" width="3.0" height="7.0" fill="none" stroke="#fff" stroke-width="1"/>
<text x="1475.0" y="705.5" font-family="Liberation Sans, sans-serif" font-size="6.5" fill="#fff" textLength="20.0" lengthAdjust="spacingAndGlyphs">GB/T93</text>
<text x="1471.0" y="719.5" font-family="Liberation Sans, sans-serif" font-size="6.5" fill="#fff" textLength="28.0" lengthAdjust="spacingAndGlyphs">GB/T70.1</text>
<path d="M1500.0 714.2 L1524.0 714.2" stroke="#ffffff" stroke-width="1.0" fill="none"/>
<path d="M1538.0 714.2 L1559.0 714.2" stroke="#ffffff" stroke-width="1.0" fill="none"/>
<rect x="1463.0" y="726.5" width="46.0" height="6.5" fill="none" stroke="#fff" stroke-width="1"/>
<rect x="1463.0" y="740.5" width="46.0" height="6.5" fill="none" stroke="#fff" stroke-width="1"/>
<text x="1552.0" y="705.5" font-family="Liberation Sans, sans-serif" font-size="6.5" fill="#fff" textLength="23.0" lengthAdjust="spacingAndGlyphs">垫圈 24</text>
<text x="1543.0" y="719.5" font-family="Liberation Sans, sans-serif" font-size="6.5" fill="#fff" textLength="41.0" lengthAdjust="spacingAndGlyphs">螺钉 M8×100</text>
<text x="1555.0" y="733.5" font-family="Liberation Sans, sans-serif" font-size="6.5" fill="#fff" textLength="14.0" lengthAdjust="spacingAndGlyphs">挡头</text>
<text x="1553.0" y="747.0" font-family="Liberation Sans, sans-serif" font-size="6.5" fill="#fff" textLength="18.0" lengthAdjust="spacingAndGlyphs">导向杆</text>
<rect x="1662.0" y="726.5" width="7.0" height="7.0" fill="none" stroke="#fff" stroke-width="1"/>
<text x="1658.0" y="747.0" font-family="Liberation Sans, sans-serif" font-size="6.5" fill="#fff" textLength="12.0" lengthAdjust="spacingAndGlyphs">钢件</text>
<text x="1764.0" y="719.5" font-family="Liberation Sans, sans-serif" font-size="6.5" fill="#fff" textLength="16.0" lengthAdjust="spacingAndGlyphs">GB98</text>
<text x="1436.0" y="767.0" font-family="Liberation Sans, sans-serif" font-size="6.5" fill="#fff" textLength="12.0" lengthAdjust="spacingAndGlyphs">序号</text>
<text x="1478.0" y="767.0" font-family="Liberation Sans, sans-serif" font-size="6.5" fill="#fff" textLength="13.0" lengthAdjust="spacingAndGlyphs">代号</text>
<text x="1556.0" y="767.0" font-family="Liberation Sans, sans-serif" font-size="6.5" fill="#fff" textLength="13.0" lengthAdjust="spacingAndGlyphs">名称</text>
<text x="1607.0" y="767.0" font-family="Liberation Sans, sans-serif" font-size="6.5" fill="#fff" textLength="12.0" lengthAdjust="spacingAndGlyphs">数量</text>
<text x="1643.0" y="767.0" font-family="Liberation Sans, sans-serif" font-size="6.5" fill="#fff" textLength="13.0" lengthAdjust="spacingAndGlyphs">材料</text>
<text x="1693.0" y="766.0" font-family="Liberation Sans, sans-serif" font-size="6.5" fill="#fff" textLength="11.0" lengthAdjust="spacingAndGlyphs">单件</text>
<text x="1715.0" y="765.0" font-family="Liberation Sans, sans-serif" font-size="6.5" fill="#fff" textLength="13.0" lengthAdjust="spacingAndGlyphs">总计</text>
<text x="1739.0" y="766.0" font-family="Liberation Sans, sans-serif" font-size="6.5" fill="#fff" textLength="13.0" lengthAdjust="spacingAndGlyphs">重量</text>
<text x="1764.0" y="767.0" font-family="Liberation Sans, sans-serif" font-size="6.5" fill="#fff" textLength="13.0" lengthAdjust="spacingAndGlyphs">备注</text>
<rect x="1434.4" y="777.5" width="348.3" height="106.2" fill="none" stroke="#ffffff" stroke-width="1.4"/>
<path d="M1434.4 790.8 L1589.5 790.8" stroke="#ffffff" stroke-width="1.2" fill="none"/>
<path d="M1434.4 804.0 L1589.5 804.0" stroke="#ffffff" stroke-width="1.2" fill="none"/>
<path d="M1434.4 817.2 L1589.5 817.2" stroke="#ffffff" stroke-width="1.2" fill="none"/>
<path d="M1434.4 831.0 L1589.5 831.0" stroke="#ffffff" stroke-width="1.2" fill="none"/>
<path d="M1434.4 845.3 L1589.5 845.3" stroke="#ffffff" stroke-width="1.2" fill="none"/>
<path d="M1434.4 858.0 L1589.5 858.0" stroke="#ffffff" stroke-width="1.2" fill="none"/>
<path d="M1434.4 871.0 L1589.5 871.0" stroke="#ffffff" stroke-width="1.2" fill="none"/>
<path d="M1455.5 777.5 L1455.5 831.0" stroke="#ffffff" stroke-width="1.2" fill="none"/>
<path d="M1474.5 777.5 L1474.5 831.0" stroke="#ffffff" stroke-width="1.2" fill="none"/>
<path d="M1505.5 777.5 L1505.5 831.0" stroke="#ffffff" stroke-width="1.2" fill="none"/>
<path d="M1536.7 777.5 L1536.7 831.0" stroke="#ffffff" stroke-width="1.2" fill="none"/>
<path d="M1559.3 777.5 L1559.3 831.0" stroke="#ffffff" stroke-width="1.2" fill="none"/>
<path d="M1459.0 831.0 L1459.0 883.7" stroke="#ffffff" stroke-width="1.2" fill="none"/>
<path d="M1482.3 831.0 L1482.3 883.7" stroke="#ffffff" stroke-width="1.2" fill="none"/>
<path d="M1512.3 831.0 L1512.3 883.7" stroke="#ffffff" stroke-width="1.2" fill="none"/>
<path d="M1536.7 831.0 L1536.7 883.7" stroke="#ffffff" stroke-width="1.2" fill="none"/>
<path d="M1559.3 831.0 L1559.3 883.7" stroke="#ffffff" stroke-width="1.2" fill="none"/>
<path d="M1589.5 777.5 L1589.5 883.7" stroke="#ffffff" stroke-width="1.6" fill="none"/>
<path d="M1591.5 777.5 L1591.5 883.7" stroke="#ffffff" stroke-width="1.0" fill="none"/>
<path d="M1512.3 845.3 L1512.3 883.7" stroke="#ffffff" stroke-width="2.0" fill="none"/>
<text x="1440.0" y="869.0" font-family="Liberation Sans, sans-serif" font-size="6.5" fill="#fff" textLength="12.0" lengthAdjust="spacingAndGlyphs">审核</text>
<text x="1463.0" y="869.0" font-family="Liberation Sans, sans-serif" font-size="6.5" fill="#fff" textLength="16.0" lengthAdjust="spacingAndGlyphs">工艺标</text>
<rect x="1484.5" y="861.5" width="25.0" height="6.5" fill="none" stroke="#fff" stroke-width="1"/>
<text x="1441.0" y="881.5" font-family="Liberation Sans, sans-serif" font-size="6.5" fill="#fff" textLength="11.0" lengthAdjust="spacingAndGlyphs">工艺</text>
<text x="1517.0" y="881.5" font-family="Liberation Sans, sans-serif" font-size="6.5" fill="#fff" textLength="12.0" lengthAdjust="spacingAndGlyphs">批准</text>
<path d="M1591.0 831.0 L1687.0 831.0" stroke="#ffffff" stroke-width="1.4" fill="none"/>
<path d="M1591.0 850.0 L1687.0 850.0" stroke="#ffffff" stroke-width="1.2" fill="none"/>
<path d="M1591.0 866.8 L1687.0 866.8" stroke="#ffffff" stroke-width="1.4" fill="none"/>
<path d="M1640.6 831.0 L1640.6 866.8" stroke="#ffffff" stroke-width="1.2" fill="none"/>
<path d="M1664.9 831.0 L1664.9 866.8" stroke="#ffffff" stroke-width="1.2" fill="none"/>
<path d="M1602.6 850.0 L1602.6 866.8" stroke="#ffffff" stroke-width="1.1" fill="none"/>
<path d="M1615.3 850.0 L1615.3 866.8" stroke="#ffffff" stroke-width="1.1" fill="none"/>
<path d="M1629.0 850.0 L1629.0 866.8" stroke="#ffffff" stroke-width="1.1" fill="none"/>
<path d="M1687.0 777.5 L1687.0 883.7" stroke="#ffffff" stroke-width="1.6" fill="none"/>
<path d="M1689.0 777.5 L1689.0 883.7" stroke="#ffffff" stroke-width="1.0" fill="none"/>
<text x="1629.0" y="808.0" font-family="Liberation Sans, sans-serif" font-size="11" fill="#fff" textLength="19.0" lengthAdjust="spacingAndGlyphs">组件</text>
<text x="1600.0" y="842.5" font-family="Liberation Sans, sans-serif" font-size="6.5" fill="#fff" textLength="26.0" lengthAdjust="spacingAndGlyphs">阶段标记</text>
<text x="1644.0" y="842.5" font-family="Liberation Sans, sans-serif" font-size="6.5" fill="#fff" textLength="13.0" lengthAdjust="spacingAndGlyphs">重量</text>
<text x="1669.0" y="842.5" font-family="Liberation Sans, sans-serif" font-size="6.5" fill="#fff" textLength="12.0" lengthAdjust="spacingAndGlyphs">比例</text>
<rect x="1672.5" y="855.0" width="6.5" height="6.5" fill="none" stroke="#fff" stroke-width="1"/>
<text x="1596.0" y="880.0" font-family="Liberation Sans, sans-serif" font-size="7" fill="#fff" textLength="5.0" lengthAdjust="spacingAndGlyphs">共</text>
<text x="1622.0" y="880.0" font-family="Liberation Sans, sans-serif" font-size="7" fill="#fff" textLength="5.0" lengthAdjust="spacingAndGlyphs">张</text>
<text x="1646.0" y="880.0" font-family="Liberation Sans, sans-serif" font-size="7" fill="#fff" textLength="5.0" lengthAdjust="spacingAndGlyphs">第</text>
<text x="1672.0" y="880.0" font-family="Liberation Sans, sans-serif" font-size="7" fill="#fff" textLength="5.0" lengthAdjust="spacingAndGlyphs">张</text>
<path d="M1689.0 808.8 L1782.7 808.8" stroke="#ffffff" stroke-width="1.4" fill="none"/>
<path d="M1689.0 810.9 L1782.7 810.9" stroke="#ffffff" stroke-width="1.4" fill="none"/>
<path d="M1689.0 843.6 L1782.7 843.6" stroke="#ffffff" stroke-width="1.4" fill="none"/>
<path d="M1689.0 845.7 L1782.7 845.7" stroke="#ffffff" stroke-width="1.4" fill="none"/>
<path d="M1689.0 866.8 L1782.7 866.8" stroke="#ffffff" stroke-width="1.4" fill="none"/>
<path d="M1689.0 868.9 L1782.7 868.9" stroke="#ffffff" stroke-width="1.4" fill="none"/>
<text x="1689.5" y="799.5" font-family="Liberation Sans, sans-serif" font-size="12.5" fill="#fff" textLength="93.0" lengthAdjust="spacingAndGlyphs">青岛盛美机械有限公司</text>
<text x="1712.0" y="833.0" font-family="Liberation Sans, sans-serif" font-size="12.5" fill="#fff" textLength="49.0" lengthAdjust="spacingAndGlyphs">导向杆总成</text>
<text x="1707.0" y="861.0" font-family="Liberation Sans, sans-serif" font-size="12" fill="#fff" textLength="57.0" lengthAdjust="spacingAndGlyphs">VS40WH.17.2</text>
<path d="M1530.4 683.8 L1530.4 743.3" stroke="#ffffff" stroke-width="1.1" fill="none"/>
<rect x="1524.5" y="707.4" width="12.5" height="13.3" fill="none" stroke="#00e070" stroke-width="1.3"/>
</svg>
<div class="a" style="left:1456px;top:810px;width:193px;height:33px;background:#fdfdfd;border:1px solid #b9d3f0;border-radius:3px;box-shadow:0 0 2px #7aa7dd"></div>
<svg style="left:1424px;top:804px" width="44" height="42" viewBox="0 0 44 42"><g transform="rotate(-9 22 21)"><rect x="4" y="4" width="36" height="34" rx="6" fill="#f05a1e"/><path d="M31.500 13.500 C26 9.500 12 10.500 12 16.500 C12 22.500 32 19 32 26 C32 32 17 32.500 10.500 28" fill="none" stroke="#fff" stroke-width="5" stroke-linecap="round"/></g></svg>
<svg style="left:1472px;top:818px" width="18" height="18" viewBox="0 0 18 18"><path d="M2 4.500 H16 V11.500 H2 Z M9 0.500 V17.500" fill="none" stroke="#1675e0" stroke-width="2.200"/></svg>
<svg style="left:1503px;top:820px" width="18" height="16" viewBox="0 0 18 16"><circle cx="4" cy="4" r="2.300" fill="none" stroke="#1675e0" stroke-width="1.600"/><path d="M12 8.500 a2 2 0 1 1 2.500 2 q0 3 -3 4 q1.500 -2 1 -4 Z" fill="#1675e0" stroke="#1675e0" stroke-width="1"/></svg>
<svg style="left:1533px;top:817px" width="16" height="20" viewBox="0 0 16 20"><rect x="5" y="1" width="6" height="11" rx="3" fill="#1675e0"/><path d="M2 8.500 V10 C2 17 14 17 14 10 V8.500" fill="none" stroke="#1675e0" stroke-width="1.600"/><path d="M5 18.500 H11" stroke="#1675e0" stroke-width="1.800"/></svg>
<svg style="left:1562px;top:820px" width="20" height="15" viewBox="0 0 20 15"><rect x="1" y="1" width="18" height="13" rx="2" fill="none" stroke="#1675e0" stroke-width="1.700"/><path d="M4 5 H16 M4 8 H16 M6 11 H14" stroke="#1675e0" stroke-width="1.800" stroke-dasharray="2 1"/></svg>
<svg style="left:1592px;top:819px" width="20" height="17" viewBox="0 0 20 17"><path d="M6 1 Q10 4 14 1 L19.500 4 L17.500 8.500 L15 7.500 V16.500 H5 V7.500 L2.500 8.500 L0.500 4 Z" fill="#1675e0"/></svg>
<svg style="left:1622px;top:819px" width="18" height="18" viewBox="0 0 18 18"><rect x="0.500" y="0.500" width="7.500" height="7.500" rx="3" fill="#1675e0"/><rect x="10" y="0.500" width="7.500" height="7.500" rx="3" fill="#1675e0"/><rect x="0.500" y="10" width="7.500" height="7.500" rx="3" fill="#1675e0"/><rect x="10" y="10" width="7.500" height="7.500" rx="3" fill="#1675e0"/><rect x="7" y="7" width="4" height="4" fill="#1675e0"/></svg>
<div class="a" style="left:1887px;top:0;width:22px;height:992px;background:#f0f0f0"></div>
<div class="a" style="left:1888px;top:21px;width:18px;height:933px;background:#c9c9c9"></div>
<svg style="left:1891px;top:6px" width="12" height="9" viewBox="0 0 12 9"><path d="M1 8 L6 2 L11 8" fill="none" stroke="#505050" stroke-width="2.200"/></svg>
<div class="a" style="left:1907px;top:0;width:2px;height:42px;background:#1c3464"></div>
<div class="a" style="left:1908px;top:42px;width:1px;height:950px;background:#5a5a5a"></div>
<div class="a" style="left:1906px;top:21px;width:1px;height:971px;background:#fdfdfd"></div>
<div class="a" style="left:0;top:992px;width:1909px;height:50px;background:linear-gradient(180deg,#eeeeee,#e7e7e7)"></div>
<svg style="left:8px;top:1006px" width="22" height="22" viewBox="0 0 22 22"><path d="M1 4 L9.500 2.800 V10.500 H1 Z M10.500 2.600 L21 1 V10.500 H10.500 Z M1 11.500 H9.500 V19.200 L1 18 Z M10.500 11.500 H21 V21 L10.500 19.400 Z" fill="#000"/></svg>
<div class="a" style="left:49px;top:992px;width:430px;height:50px;background:#fff;border:1px solid #c4c4c4"></div>
<svg style="left:62px;top:1005px" width="24" height="24" viewBox="0 0 24 24"><circle cx="14.500" cy="9" r="6.500" fill="none" stroke="#111" stroke-width="1.700"/><path d="M10 13.500 L2 21.500" stroke="#111" stroke-width="1.800"/></svg>
<div class="t" style="left:98px;top:1007px;font-size:19px;color:#2a2a2a;letter-spacing:0.050px">在这里输入你要搜索的内容</div>
<svg style="left:497px;top:1006px" width="22" height="22" viewBox="0 0 22 22"><circle cx="11" cy="11" r="8.300" fill="none" stroke="#000" stroke-width="3"/></svg>
<svg style="left:556px;top:1005px" width="26" height="24" viewBox="0 0 26 24"><path d="M2 2 V5 M2 19 V22 M2 3 H17 M2 21 H17 M17 2 V5 M17 19 V22" fill="none" stroke="#111" stroke-width="1.500"/><rect x="2.500" y="7.500" width="14" height="9" fill="none" stroke="#111" stroke-width="1.600"/><path d="M21.500 2 V8 M21.500 16 V22" stroke="#111" stroke-width="1.500"/><rect x="20" y="10" width="3" height="4" fill="#111"/></svg>
<svg style="left:617px;top:1001px" width="32" height="32" viewBox="0 0 32 32"><defs><linearGradient id="eg1" x1="0" y1="0" x2="1" y2="1"><stop offset="0" stop-color="#35c1f1"/><stop offset="0.500" stop-color="#1b9de2"/><stop offset="1" stop-color="#0c59a4"/></linearGradient><linearGradient id="eg2" x1="0" y1="0" x2="1" y2="0"><stop offset="0" stop-color="#2fb8e8"/><stop offset="1" stop-color="#6ad86a"/></linearGradient></defs><circle cx="16" cy="16" r="14.500" fill="url(#eg1)"/><path d="M2.500 12 C5 3 14 0.500 21 2.500 C28 5 31 11 30 17 C29 21 25 22 21 21 C24 18 22 13 17 12 C12 11 8 14 8 19 C4 18 2 15 2.500 12 Z" fill="url(#eg2)"/><path d="M8 19 C8 14 12 11 17 12 C21 13 23 16 21.500 19 C20 16 15 15 13 18 C11 22 14 27 20 28.500 C13 31 7 26 8 19 Z" fill="#0f4f9a"/><path d="M13 18 C15 15 20 16 21.500 19 C22 20.500 21 22 19.500 22.500 C17 23.500 13 22 13 18 Z" fill="#e9e9e9"/></svg>
<svg style="left:678px;top:1003px" width="32" height="28" viewBox="0 0 32 28"><path d="M2 3 H12 L14 5.500 H2 Z" fill="#e8a317"/><rect x="2" y="5" width="28" height="19" rx="1" fill="#f7c948"/><rect x="2" y="9" width="28" height="15" fill="#fbd96a"/><path d="M8 26 V16.500 H24 V26 H19.500 V20.500 H12.500 V26 Z" fill="#3a86d6"/><rect x="8" y="14.500" width="16" height="2.500" fill="#5aa2e6"/></svg>
<svg style="left:741px;top:1003px" width="32" height="28" viewBox="0 0 32 28"><path d="M1 10 L16 1 L31 10 V27 H1 Z" fill="#0f64b4"/><path d="M4 8 H28 V20 H4 Z" fill="#fff"/><path d="M1 10.500 L16 20 L31 10.500 V27 H1 Z" fill="#2a9be6"/><path d="M1 27 L16 17.500 L31 27 Z" fill="#1a86d8"/></svg>
<svg style="left:803px;top:1006px" width="30" height="22" viewBox="0 0 30 22"><rect x="1" y="1" width="28" height="19" fill="#7cc8f2" stroke="#1c7fc8" stroke-width="1.500"/><circle cx="10" cy="9" r="4.500" fill="#f3c54a" stroke="#fff" stroke-width="1"/><path d="M10 9 V4.500 A4.500 4.500 0 0 1 14.500 9 Z" fill="#e8743a"/><path d="M18 6 H26 M18 9.500 H26 M18 13 H26" stroke="#fff" stroke-width="1.600"/><path d="M5 16.500 H17" stroke="#f3c54a" stroke-width="1.600"/></svg>
<svg style="left:865px;top:1002px" width="32" height="30" viewBox="0 0 32 30"><path d="M27 1 L23.500 8 H12 L8 13.500 L12 22 H22 L23 19 H15 L17.500 14 H29.500 L27 26 L24 29 H9 L2 15 L9 5 H20 Z" fill="#e1251b"/><path d="M27 1 L23.500 8 H12 L9 5 H20 Z" fill="#f0493e"/></svg>
<svg style="left:927px;top:1003px" width="32" height="28" viewBox="0 0 32 28"><rect x="9" y="1" width="22" height="26" rx="1.500" fill="#2b7cd3"/><rect x="9" y="1" width="22" height="6.500" fill="#41a5ee"/><rect x="9" y="14" width="22" height="6.500" fill="#185abd"/><rect x="9" y="20.500" width="22" height="6.500" fill="#103f91"/><rect x="1" y="6" width="16" height="16" rx="1.500" fill="#185abd"/><path d="M4 9.500 L6.500 18.500 L9 11.500 L11.500 18.500 L14 9.500" fill="none" stroke="#fff" stroke-width="1.800"/></svg>
<svg style="left:988px;top:1002px" width="32" height="30" viewBox="0 0 32 30"><circle cx="18" cy="15" r="13.500" fill="#ed6c47"/><path d="M18 1.500 A13.500 13.500 0 0 1 31.500 15 H18 Z" fill="#ff8f6b"/><path d="M31.500 15 A13.500 13.500 0 0 1 8 24 L18 15 Z" fill="#d35230"/><rect x="1" y="7" width="16" height="16" rx="1.500" fill="#c43e1c"/><path d="M6.500 19.500 V10.500 H10 C14 10.500 14 16 10 16 H6.500" fill="none" stroke="#fff" stroke-width="2"/></svg>
<svg style="left:1050px;top:1000px" width="34" height="34" viewBox="0 0 34 34"><path d="M3 4 L24 1 L27 19 L7 23 Z" fill="#2a50c8" stroke="#9aa8c0" stroke-width="1.500"/><path d="M5 6 L14 4.500 L10 21 L8 21.500 Z" fill="#5a86ea"/><path d="M14 23 L20 22 L22 27 L13 29 Z" fill="#b0b8c4"/><path d="M9 29 L25 26 L26 29 L10 32 Z" fill="#8c96a6"/><circle cx="25" cy="25" r="7" fill="#dfe3e8" stroke="#a9afb8"/><path d="M21.500 23 L24.500 25.500 L21.500 28 M28.500 22 L25.500 24.500 L28.500 27" fill="none" stroke="#2f9e44" stroke-width="1.600"/></svg>
<div class="a" style="left:608px;top:1039px;width:52px;height:3px;background:#0f6fd0"></div>
<div class="a" style="left:670px;top:1039px;width:51px;height:3px;background:#0f6fd0"></div>
<div class="a" style="left:711px;top:1039px;width:10px;height:3px;background:#7fb0e6"></div>
<div class="a" style="left:856px;top:1039px;width:51px;height:3px;background:#0f6fd0"></div>
<div class="a" style="left:918px;top:1039px;width:51px;height:3px;background:#0f6fd0"></div>
<div class="a" style="left:959px;top:1039px;width:10px;height:3px;background:#7fb0e6"></div>
<div class="a" style="left:980px;top:1039px;width:51px;height:3px;background:#0f6fd0"></div>
<div class="a" style="left:1042px;top:1039px;width:51px;height:3px;background:#0f6fd0"></div>
<svg style="left:1545px;top:1011px" width="18" height="12" viewBox="0 0 18 12"><path d="M1.500 10.500 L9 2 L16.500 10.500" fill="none" stroke="#111" stroke-width="1.600"/></svg>
<svg style="left:1574px;top:1008px" width="22" height="16" viewBox="0 0 22 16"><path d="M5 14.500 C0 14.500 0 8 4.500 7.500 C5 2 13 1 15 6 C20 5.500 22 14.500 16 14.500 Z" fill="#9a9a9a" stroke="#222" stroke-width="1.500"/><path d="M3 9 L16 13" stroke="#ccc" stroke-width="2"/></svg>
<svg style="left:1606px;top:1007px" width="20" height="20" viewBox="0 0 20 20"><path d="M2 17 A15 15 0 0 1 15 2" fill="none" stroke="#bbb" stroke-width="1.200"/><path d="M5.500 17 A11.500 11.500 0 0 1 16 6" fill="none" stroke="#444" stroke-width="1.400"/><path d="M9 17 A8 8 0 0 1 16.500 9.500" fill="none" stroke="#222" stroke-width="1.500"/><path d="M12 17 A4.500 4.500 0 0 1 16.500 12.500" fill="none" stroke="#222" stroke-width="1.500"/><circle cx="15.500" cy="17" r="1.600" fill="#111"/></svg>
<svg style="left:1634px;top:1009px" width="24" height="16" viewBox="0 0 24 16"><rect x="4.500" y="4" width="16" height="10" fill="none" stroke="#111" stroke-width="1.500"/><rect x="6.500" y="6" width="7" height="6" fill="#111"/><rect x="21" y="7" width="2" height="4" fill="#111"/><path d="M2 1 V4 M5 1 V4 M1 4 H6 V7 H1 Z M3.500 7 V10" fill="#111" stroke="#111" stroke-width="1.200"/></svg>
<svg style="left:1664px;top:1007px" width="24" height="20" viewBox="0 0 24 20"><path d="M2 7 H6 L11 2.500 V17.500 L6 13 H2 Z" fill="none" stroke="#111" stroke-width="1.400"/><path d="M14 7 A4 4 0 0 1 14 13" fill="none" stroke="#333" stroke-width="1.300"/><path d="M16.500 4.500 A7.500 7.500 0 0 1 16.500 15.500" fill="none" stroke="#999" stroke-width="1.200"/><path d="M19 2 A11 11 0 0 1 19 18" fill="none" stroke="#bbb" stroke-width="1.200"/></svg>
<div class="t" style="left:1696px;top:997px;width:80px;text-align:center;font-size:16px;color:#111">21:46</div>
<div class="t" style="left:1691px;top:1020px;width:90px;text-align:center;font-size:16px;color:#111">2022/3/20</div>
<svg style="left:1799px;top:1003px" width="28" height="23" viewBox="0 0 28 23"><path d="M0.500 0.500 L3.500 2.500 V22 H0.500 Z M27.500 0.500 L24.500 2.500 V22 H27.500 Z" fill="#111"/><path d="M5.500 5 L8 5 L14 15 L20 5 L22.500 5 V22 H19.500 V11.500 L14 20.500 L8.500 11.500 V22 H5.500 Z" fill="#111"/></svg>
<svg style="left:1857px;top:1005px" width="30" height="30" viewBox="0 0 30 30"><path d="M1 1 H21 V17.500 H9 L9 21 L5.500 17.500 H1 Z" fill="#000"/><path d="M4.500 6 H17.500 M4.500 9.500 H17.500 M4.500 13 H17.500" stroke="#e9e9e9" stroke-width="1.300"/><circle cx="20" cy="20" r="9.500" fill="#d6d6d6" stroke="#8e8e8e" stroke-width="1"/><text x="20" y="25.500" font-family="Liberation Sans, sans-serif" font-weight="bold" font-size="15" text-anchor="middle" fill="#111">2</text></svg>
<div class="a" style="left:1903px;top:994px;width:1px;height:48px;background:#8a8a8a"></div>

</div>
</body></html>
